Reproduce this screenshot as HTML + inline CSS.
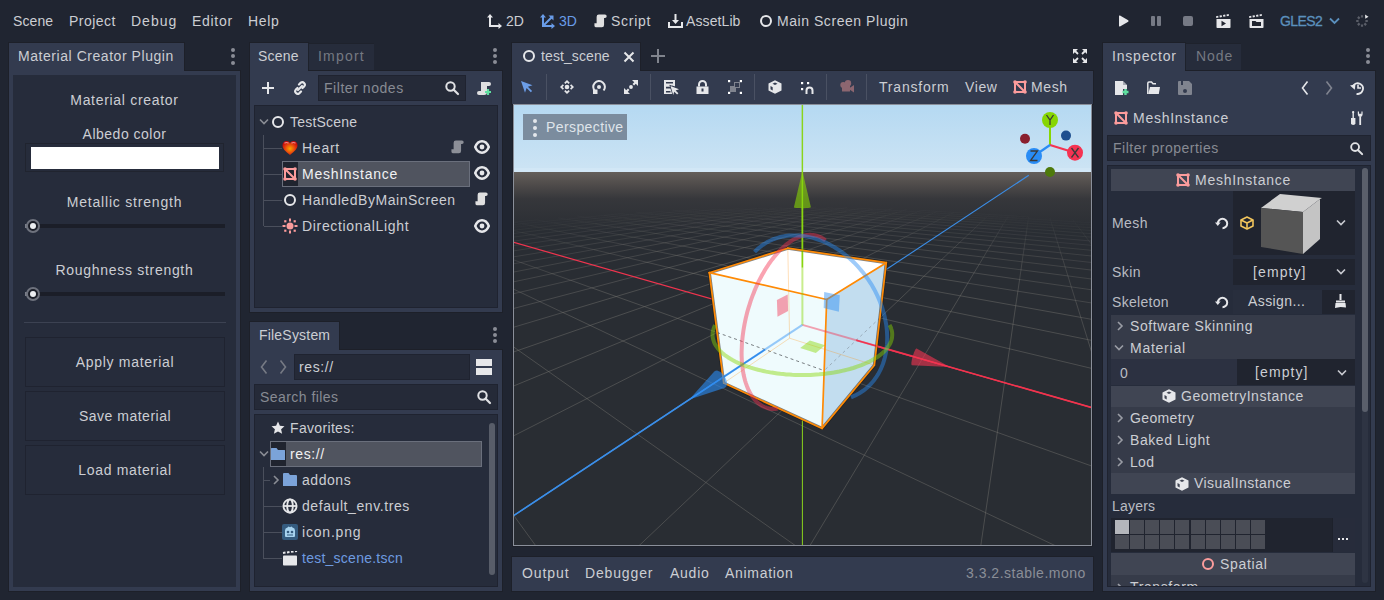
<!DOCTYPE html>
<html><head><meta charset="utf-8">
<style>
*{box-sizing:border-box;margin:0;padding:0}
html,body{width:1384px;height:600px;overflow:hidden;background:#202531;font-family:"Liberation Sans",sans-serif;font-size:14px;color:#ccced3}
.a{position:absolute}
.t{position:absolute;white-space:pre;line-height:16px;letter-spacing:0.6px}
.c{text-align:center}
.tab{position:absolute;background:#333b4f;box-shadow:0 0 0 1px #1d2029}
.tabu{position:absolute;background:#262c3b;border:1px solid #1e222c;border-right:none}
.pnl{position:absolute;background:#333b4f;box-shadow:0 0 0 1px #1d2029}
.dots{position:absolute;width:5px;height:17px}
.dots i{position:absolute;left:0.7px;width:4px;height:4px;margin-top:1px;border-radius:50%;background:#8a8d96}
</style></head><body>
<!-- MENU -->
<div class="t" style="left:13px;top:13px;letter-spacing:0.1px">Scene</div>
<div class="t" style="left:69px;top:13px;letter-spacing:0.47px">Project</div>
<div class="t" style="left:131px;top:13px;letter-spacing:1px">Debug</div>
<div class="t" style="left:192px;top:13px;letter-spacing:0.7px">Editor</div>
<div class="t" style="left:248px;top:13px;letter-spacing:0.67px">Help</div>

<!-- TOPBAR -->
<svg class="a" style="left:487px;top:14px" width="16" height="15" viewBox="0 0 16 15"><g fill="#e6e7ea"><path d="M3 0L6 3.5H4V11H11.5V9L15 12 11.5 15V13H2V3.5H0z"/></g></svg>
<div class="t" style="left:506px;top:13px;letter-spacing:0px">2D</div>
<svg class="a" style="left:540px;top:14px" width="16" height="15" viewBox="0 0 16 15"><g fill="#699ce8"><path d="M3 0L6 3.5H4V9.6L10.3 3.3 8.5 1.5H13.5V6.5L11.7 4.7 5.4 11H11.5V9L15 12 11.5 15V13H2V3.5H0z"/></g></svg>
<div class="t" style="left:559px;top:13px;letter-spacing:0px;color:#699ce8">3D</div>
<svg class="a" style="left:594px;top:14px" width="14" height="14" viewBox="0 0 16 16"><path d="M3 3Q3 0.5 5.5 0.5H12.5Q14.5 0.5 14.5 2.5Q14.5 4.5 12.5 4.5H11.5V12.5Q11.5 15 9 15H2Q0.5 15 0.5 13.5V10.5H3z" fill="#e0e0e0"/></svg>
<div class="t" style="left:611px;top:13px;letter-spacing:0.74px">Script</div>
<svg class="a" style="left:668px;top:14px" width="15" height="14" viewBox="0 0 15 14"><g fill="#e6e7ea"><path d="M6.5 0h2v6h2.5L7.5 10 4 6h2.5z"/><path d="M0 8h2v4h11V8h2v6H0z"/></g></svg>
<div class="t" style="left:686px;top:13px;letter-spacing:0.1px">AssetLib</div>
<div class="a" style="left:760px;top:15px;width:12px;height:12px;border-radius:50%;border:2px solid #e6e7ea"></div>
<div class="t" style="left:777px;top:13px;letter-spacing:0.55px">Main Screen Plugin</div>
<svg class="a" style="left:1118px;top:15px" width="11" height="12" viewBox="0 0 11 12"><path d="M1 1.2Q1 0 2 0.6L10.2 5.3Q11 6 10.2 6.7L2 11.4Q1 12 1 10.8z" fill="#e6e7ea"/></svg>
<div class="a" style="left:1151px;top:16px;width:4px;height:10px;border-radius:1px;background:#767a85"></div>
<div class="a" style="left:1157px;top:16px;width:4px;height:10px;border-radius:1px;background:#767a85"></div>
<div class="a" style="left:1183px;top:16px;width:10px;height:10px;border-radius:2px;background:#767a85"></div>
<svg class="a" style="left:1216px;top:14px" width="15" height="14" viewBox="0 0 15 14"><g fill="#e6e7ea"><path d="M0 2.2L2.2 1.8 2.5 3.6 0.3 4zM3.5 1.6L5.7 1.2 6 3 3.8 3.4zM7 1L9.2 0.6 9.5 2.4 7.3 2.8zM10.5 0.4L12.7 0 13 1.8 10.8 2.2z"/><path d="M0.5 5h14v8.2Q14.5 14 13.7 14H1.3Q0.5 14 0.5 13.2z"/></g><path d="M5.5 6.8L10 9.5 5.5 12.2z" fill="#20242f"/></svg>
<svg class="a" style="left:1249px;top:14px" width="15" height="14" viewBox="0 0 15 14"><g fill="#e6e7ea"><path d="M0 2.2L2.2 1.8 2.5 3.6 0.3 4zM3.5 1.6L5.7 1.2 6 3 3.8 3.4zM7 1L9.2 0.6 9.5 2.4 7.3 2.8zM10.5 0.4L12.7 0 13 1.8 10.8 2.2z"/><path d="M0.5 5h14v8.2Q14.5 14 13.7 14H1.3Q0.5 14 0.5 13.2z"/></g><path d="M3 7h3.5l1 1H12V12H3z" fill="#20242f"/></svg>
<div class="t" style="left:1280px;top:13px;letter-spacing:-0.6px;color:#5b90bd;-webkit-text-stroke:0.3px #5b90bd">GLES2</div>
<svg class="a" style="left:1329px;top:17px" width="11" height="8"><path d="M1 1.5l4.5 4.5 4.5-4.5" fill="none" stroke="#5b90bd" stroke-width="1.8"/></svg>
<svg class="a" style="left:1354px;top:13px" width="16" height="16" viewBox="0 0 16 16"><g stroke="#5a5e68" stroke-width="2.2" stroke-linecap="butt"><path d="M8 2.2v2.4M8 11.4v2.4M2.2 8h2.4M11.4 8h2.4M3.9 3.9l1.7 1.7M10.4 10.4l1.7 1.7M3.9 12.1l1.7-1.7"/></g><path d="M11 1.5l3.5 2.2-3.2 2z" fill="#e6e7ea"/></svg>

<!-- LEFT DOCK -->
<div class="tab" style="left:9px;top:43px;width:175px;height:28px"></div>
<div class="t" style="left:18px;top:48px;letter-spacing:0.55px">Material Creator Plugin</div>
<div class="pnl" style="left:9px;top:71px;width:231px;height:520px"></div><div class="a" style="left:9px;top:69px;width:175px;height:3px;background:#333b4f"></div>
<div class="a" style="left:13px;top:75px;width:223px;height:512px;background:#262c3b"></div>
<div class="t c" style="left:13px;top:92px;width:223px;letter-spacing:0.7px">Material creator</div>
<div class="t c" style="left:13px;top:126px;width:223px;letter-spacing:0.5px">Albedo color</div>
<div class="a" style="left:25px;top:143px;width:199px;height:29px;border:1px solid #20242f"></div>
<div class="a" style="left:31px;top:147px;width:188px;height:22px;background:#fff"></div>
<div class="t c" style="left:13px;top:194px;width:223px;letter-spacing:0.8px">Metallic strength</div>
<div class="a" style="left:25px;top:224px;width:200px;height:4px;background:#1b1e28"></div>
<div class="a" style="left:25px;top:224px;width:8px;height:4px;background:#7b7f8a"></div>
<div class="a" style="left:26px;top:219px;width:14px;height:14px;border-radius:50%;border:2px solid #6e727d;background:#1b1e28"></div>
<div class="a" style="left:30px;top:223px;width:6px;height:6px;border-radius:50%;background:#eceef1"></div>
<div class="t c" style="left:13px;top:262px;width:223px;letter-spacing:0.7px">Roughness strength</div>
<div class="a" style="left:25px;top:292px;width:200px;height:4px;background:#1b1e28"></div>
<div class="a" style="left:25px;top:292px;width:8px;height:4px;background:#7b7f8a"></div>
<div class="a" style="left:26px;top:287px;width:14px;height:14px;border-radius:50%;border:2px solid #6e727d;background:#1b1e28"></div>
<div class="a" style="left:30px;top:291px;width:6px;height:6px;border-radius:50%;background:#eceef1"></div>
<div class="a" style="left:24px;top:322px;width:202px;height:1px;background:#3c4252"></div>
<div class="a" style="left:25px;top:337px;width:200px;height:50px;border:1px solid #1f2330"></div>
<div class="t c" style="left:25px;top:354px;width:200px;letter-spacing:0.7px">Apply material</div>
<div class="a" style="left:25px;top:391px;width:200px;height:50px;border:1px solid #1f2330"></div>
<div class="t c" style="left:25px;top:408px;width:200px;letter-spacing:0.5px">Save material</div>
<div class="a" style="left:25px;top:445px;width:200px;height:50px;border:1px solid #1f2330"></div>
<div class="t c" style="left:25px;top:462px;width:200px;letter-spacing:0.65px">Load material</div>
<div class="dots" style="left:230px;top:47px"><i style="top:0"></i><i style="top:6px"></i><i style="top:13px"></i></div>

<!-- SCENE DOCK -->
<div class="tab" style="left:250px;top:43px;width:58px;height:28px"></div>
<div class="tabu" style="left:308px;top:43px;width:66px;height:28px"></div>
<div class="t" style="left:258px;top:48px;letter-spacing:0.2px">Scene</div>
<div class="t" style="left:318px;top:48px;letter-spacing:1.2px;color:#757982">Import</div>
<div class="dots" style="left:492px;top:47px"><i style="top:0"></i><i style="top:6px"></i><i style="top:12px"></i></div>
<div class="pnl" style="left:250px;top:71px;width:252px;height:241px"></div><div class="a" style="left:250px;top:69px;width:58px;height:3px;background:#333b4f"></div>
<svg class="a" style="left:261px;top:81px" width="14" height="14"><path d="M7 1v12M1 7h12" stroke="#e6e7ea" stroke-width="2"/></svg>
<svg class="a" style="left:292px;top:80px" width="16" height="16" viewBox="0 0 16 16"><g fill="none" stroke="#e6e7ea" stroke-width="2.2" stroke-linecap="round"><path d="M7 4.5l1.8-1.8a2.5 2.5 0 0 1 3.5 3.5L10.5 8"/><path d="M9 11.5l-1.8 1.8a2.5 2.5 0 0 1-3.5-3.5L5.5 8"/><path d="M6 10l4-4"/></g></svg>
<div class="a" style="left:318px;top:75px;width:148px;height:26px;background:#252a38;border:1px solid #1f2330"></div>
<div class="t" style="left:324px;top:80px;letter-spacing:0.55px;color:#878a93">Filter nodes</div>
<svg class="a" style="left:444px;top:80px" width="16" height="16" viewBox="0 0 16 16"><circle cx="6.5" cy="6.5" r="4.2" fill="none" stroke="#e0e1e4" stroke-width="2"/><path d="M9.5 9.5l4.5 4.5" stroke="#e0e1e4" stroke-width="2.2" stroke-linecap="round"/></svg>
<svg class="a" style="left:476px;top:80px" width="16" height="16" viewBox="0 0 16 16"><path d="M5 2h8a2 2 0 0 1 0 4h-2v6a3 3 0 0 1-3 3H3a2 2 0 0 1 0-4h2z" fill="#e0e0e0"/><path d="M12 9v6M9 12h6" stroke="#5fe0a0" stroke-width="2.2"/></svg>
<div class="a" style="left:254px;top:105px;width:244px;height:203px;background:#262c3b;border:1px solid #1f2330"></div>
<svg class="a" style="left:259px;top:118px" width="10" height="8"><path d="M1 1.5l4 4 4-4" fill="none" stroke="#8a8d95" stroke-width="1.6"/></svg>
<div class="a" style="left:272px;top:116px;width:12px;height:12px;border-radius:50%;border:2px solid #e6e7ea"></div>
<div class="t" style="left:290px;top:114px;letter-spacing:0.2px">TestScene</div>
<div class="a" style="left:263px;top:135px;width:1px;height:91px;background:#4a4f5c"></div>
<div class="a" style="left:264px;top:148px;width:18px;height:1px;background:#4a4f5c"></div>
<div class="a" style="left:264px;top:174px;width:18px;height:1px;background:#4a4f5c"></div>
<div class="a" style="left:264px;top:200px;width:18px;height:1px;background:#4a4f5c"></div>
<div class="a" style="left:264px;top:226px;width:18px;height:1px;background:#4a4f5c"></div>
<svg class="a" style="left:282px;top:140px" width="16" height="16" viewBox="0 0 16 16"><defs><radialGradient id="hg" cx="0.5" cy="0.55" r="0.55"><stop offset="0" stop-color="#f7a800"/><stop offset="0.55" stop-color="#e84a0c"/><stop offset="1" stop-color="#c40c0c"/></radialGradient></defs><path d="M8 15C3 11 0.5 8.5 0.5 5.2 0.5 2.8 2.3 1 4.5 1 6 1 7.2 1.8 8 3 8.8 1.8 10 1 11.5 1 13.7 1 15.5 2.8 15.5 5.2 15.5 8.5 13 11 8 15z" fill="url(#hg)"/><path d="M2.5 3.2Q4.5 1.8 6.5 3.2M9.5 3.2Q11.5 1.8 13.5 3.2" stroke="#f08a8a" stroke-width="1.2" fill="none"/></svg>
<div class="t" style="left:302px;top:140px;letter-spacing:0.75px">Heart</div>
<div class="a" style="left:282px;top:161px;width:188px;height:26px;background:#50545f;border:1px solid #6a6f7c"></div>
<div class="a" style="left:283px;top:162px;width:15px;height:24px;background:#20242f"></div>
<svg class="a" style="left:283px;top:167px" width="14" height="14" viewBox="0 0 14 14"><g stroke="#fc9c9c" stroke-width="2" fill="none"><path d="M2 2h10v10H2zM2 2l10 10"/></g><g fill="#fc9c9c"><circle cx="2" cy="2" r="1.8"/><circle cx="12" cy="2" r="1.8"/><circle cx="2" cy="12" r="1.8"/><circle cx="12" cy="12" r="1.8"/></g></svg>
<div class="t" style="left:302px;top:166px;letter-spacing:0.73px;color:#f0f1f3">MeshInstance</div>
<div class="a" style="left:284px;top:194px;width:12px;height:12px;border-radius:50%;border:2px solid #e6e7ea"></div>
<div class="t" style="left:302px;top:192px;letter-spacing:0.55px">HandledByMainScreen</div>
<svg class="a" style="left:282px;top:218px" width="16" height="16" viewBox="0 0 16 16"><g fill="#fc9c9c"><circle cx="8" cy="8" r="3.5"/><rect x="7" y="0.5" width="2" height="3"/><rect x="7" y="12.5" width="2" height="3"/><rect x="0.5" y="7" width="3" height="2"/><rect x="12.5" y="7" width="3" height="2"/><rect x="2.2" y="2.2" width="2.2" height="2.2"/><rect x="11.6" y="2.2" width="2.2" height="2.2"/><rect x="2.2" y="11.6" width="2.2" height="2.2"/><rect x="11.6" y="11.6" width="2.2" height="2.2"/></g></svg>
<div class="t" style="left:302px;top:218px;letter-spacing:0.67px">DirectionalLight</div>
<svg class="a" style="left:451px;top:140px" width="14" height="14" viewBox="0 0 16 16"><path d="M3 3Q3 0.5 5.5 0.5H12.5Q14.5 0.5 14.5 2.5Q14.5 4.5 12.5 4.5H11.5V12.5Q11.5 15 9 15H2Q0.5 15 0.5 13.5V10.5H3z" fill="#8c8f97"/></svg>
<svg class="a" style="left:475px;top:192px" width="14" height="14" viewBox="0 0 16 16"><path d="M3 3Q3 0.5 5.5 0.5H12.5Q14.5 0.5 14.5 2.5Q14.5 4.5 12.5 4.5H11.5V12.5Q11.5 15 9 15H2Q0.5 15 0.5 13.5V10.5H3z" fill="#e0e0e0"/></svg>
<svg class="a" style="left:474px;top:140px" width="16" height="14" viewBox="0 0 16 14"><path d="M1.2 7C3 2.6 5.5 1.3 8 1.3s5 1.3 6.8 5.7c-1.8 4.4-4.3 5.7-6.8 5.7S3 11.4 1.2 7z" fill="none" stroke="#e6e7ea" stroke-width="2.5"/><circle cx="8" cy="7" r="2.4" fill="#e6e7ea"/></svg>
<svg class="a" style="left:474px;top:166px" width="16" height="14" viewBox="0 0 16 14"><path d="M1.2 7C3 2.6 5.5 1.3 8 1.3s5 1.3 6.8 5.7c-1.8 4.4-4.3 5.7-6.8 5.7S3 11.4 1.2 7z" fill="none" stroke="#e6e7ea" stroke-width="2.5"/><circle cx="8" cy="7" r="2.4" fill="#e6e7ea"/></svg>
<svg class="a" style="left:474px;top:219px" width="16" height="14" viewBox="0 0 16 14"><path d="M1.2 7C3 2.6 5.5 1.3 8 1.3s5 1.3 6.8 5.7c-1.8 4.4-4.3 5.7-6.8 5.7S3 11.4 1.2 7z" fill="none" stroke="#e6e7ea" stroke-width="2.5"/><circle cx="8" cy="7" r="2.4" fill="#e6e7ea"/></svg>

<!-- FILESYSTEM DOCK -->
<div class="tab" style="left:250px;top:322px;width:89px;height:28px"></div>
<div class="t" style="left:259px;top:327px;letter-spacing:0.2px">FileSystem</div>
<div class="dots" style="left:492px;top:326px"><i style="top:0"></i><i style="top:6px"></i><i style="top:12px"></i></div>
<div class="pnl" style="left:250px;top:350px;width:252px;height:241px"></div><div class="a" style="left:250px;top:348px;width:89px;height:3px;background:#333b4f"></div>
<svg class="a" style="left:259px;top:359px" width="10" height="16"><path d="M7.5 1.5L2.5 8l5 6.5" fill="none" stroke="#767a84" stroke-width="1.6"/></svg>
<svg class="a" style="left:278px;top:359px" width="10" height="16"><path d="M2.5 1.5L7.5 8l-5 6.5" fill="none" stroke="#767a84" stroke-width="1.6"/></svg>
<div class="a" style="left:294px;top:354px;width:176px;height:26px;background:#252a38;border:1px solid #1f2330"></div>
<div class="t" style="left:299px;top:359px;letter-spacing:0.6px">res://</div>
<div class="a" style="left:476px;top:359px;width:16px;height:7px;background:#e6e7ea"></div>
<div class="a" style="left:476px;top:368px;width:16px;height:7px;background:#e6e7ea"></div>
<div class="a" style="left:254px;top:384px;width:244px;height:26px;background:#252a38;border:1px solid #1f2330"></div>
<div class="t" style="left:260px;top:389px;letter-spacing:0.45px;color:#878a93">Search files</div>
<svg class="a" style="left:476px;top:389px" width="16" height="16" viewBox="0 0 16 16"><circle cx="6.5" cy="6.5" r="4.2" fill="none" stroke="#e0e1e4" stroke-width="2"/><path d="M9.5 9.5l4.5 4.5" stroke="#e0e1e4" stroke-width="2.2" stroke-linecap="round"/></svg>
<div class="a" style="left:254px;top:414px;width:244px;height:173px;background:#262c3b;border:1px solid #1f2330"></div>
<svg class="a" style="left:271px;top:421px" width="14" height="14" viewBox="0 0 14 14"><path d="M7 0.5l1.9 4.2 4.6 0.5-3.4 3.1 1 4.5L7 10.5l-4.1 2.3 1-4.5L0.5 5.2l4.6-0.5z" fill="#e6e7ea"/></svg>
<div class="t" style="left:290px;top:420px;letter-spacing:0.33px">Favorites:</div>
<div class="a" style="left:270px;top:441px;width:212px;height:26px;background:#50545f;border:1px solid #6a6f7c"></div>
<div class="a" style="left:271px;top:442px;width:15px;height:24px;background:#20242f"></div>
<svg class="a" style="left:259px;top:450px" width="10" height="8"><path d="M1 1.5l4 4 4-4" fill="none" stroke="#8a8d95" stroke-width="1.6"/></svg>
<svg class="a" style="left:271px;top:447px" width="14" height="14" viewBox="0 0 14 14"><path d="M0 1.5Q0 1 0.5 1H5.5L7 3H13.5Q14 3 14 3.5V13H0z" fill="#7ba3d9"/></svg>
<div class="t" style="left:290px;top:446px;letter-spacing:0.6px;color:#f0f1f3">res://</div>
<div class="a" style="left:263px;top:467px;width:1px;height:92px;background:#4a4f5c"></div>
<div class="a" style="left:264px;top:480px;width:6px;height:1px;background:#4a4f5c"></div>
<div class="a" style="left:264px;top:506px;width:18px;height:1px;background:#4a4f5c"></div>
<div class="a" style="left:264px;top:532px;width:18px;height:1px;background:#4a4f5c"></div>
<div class="a" style="left:264px;top:558px;width:18px;height:1px;background:#4a4f5c"></div>
<svg class="a" style="left:272px;top:475px" width="8" height="10"><path d="M2 1l4 4-4 4" fill="none" stroke="#8a8d95" stroke-width="1.6"/></svg>
<svg class="a" style="left:283px;top:473px" width="14" height="13" viewBox="0 0 14 13"><path d="M0 1Q0 0 1 0H5.5L7 2H13Q14 2 14 3V13H0z" fill="#7ba3d9"/></svg>
<div class="t" style="left:302px;top:472px;letter-spacing:0.55px">addons</div>
<svg class="a" style="left:282px;top:498px" width="16" height="16" viewBox="0 0 16 16"><g fill="none" stroke="#e6e7ea" stroke-width="1.8"><circle cx="8" cy="8" r="6.6"/><ellipse cx="8" cy="8" rx="2.8" ry="6.6"/><path d="M1.4 8h13.2"/></g></svg>
<div class="t" style="left:302px;top:498px;letter-spacing:0.58px">default_env.tres</div>
<svg class="a" style="left:282px;top:524px" width="16" height="16" viewBox="0 0 16 16"><rect width="16" height="16" rx="2" fill="#355c80"/><path d="M3 6.5Q3 4 5.5 3.5L6.5 2.5 8 3.2 9.5 2.5 10.5 3.5Q13 4 13 6.5V12Q13 13 12 13H4Q3 13 3 12z" fill="#a8d4f0"/><circle cx="6" cy="8" r="1.3" fill="#355c80"/><circle cx="10" cy="8" r="1.3" fill="#355c80"/><path d="M5 11h6" stroke="#355c80" stroke-width="1"/></svg>
<div class="t" style="left:302px;top:524px;letter-spacing:0.8px">icon.png</div>
<svg class="a" style="left:282px;top:551px" width="16" height="15" viewBox="0 0 16 15"><path d="M1 2l2.5-0.4M5 1.4l2.5-0.4M9 0.8l2.5-0.4M13 0.2l2-0.3" stroke="#e6e7ea" stroke-width="2"/><rect x="1" y="4.5" width="14" height="10" rx="0.8" fill="#e6e7ea"/></svg>
<div class="t" style="left:302px;top:550px;letter-spacing:0.25px;color:#6e9be0">test_scene.tscn</div>
<div class="a" style="left:489px;top:423px;width:6px;height:152px;border-radius:3px;background:#585d69"></div>

<!-- CENTER -->
<div class="tab" style="left:512px;top:43px;width:128px;height:28px"></div>
<div class="a" style="left:523px;top:50px;width:12px;height:12px;border-radius:50%;border:2px solid #e6e7ea"></div>
<div class="t" style="left:541px;top:48px;letter-spacing:0.1px">test_scene</div>
<svg class="a" style="left:623px;top:51px" width="12" height="12"><path d="M1.5 1.5l9 9M10.5 1.5l-9 9" stroke="#e6e7ea" stroke-width="2"/></svg>
<svg class="a" style="left:650px;top:48px" width="16" height="16"><path d="M8 1v14M1 8h14" stroke="#80848d" stroke-width="2"/></svg>
<svg class="a" style="left:1073px;top:49px" width="14" height="14" viewBox="0 0 14 14"><g fill="#e6e7ea"><path d="M0 0h5L0 5zM14 0v5L9 0zM0 14v-5l5 5zM14 14H9l5-5z"/></g><g stroke="#e6e7ea" stroke-width="1.8"><path d="M1.5 1.5l3.5 3.5M12.5 1.5L9 5M1.5 12.5L5 9M12.5 12.5L9 9"/></g></svg>
<div class="pnl" style="left:512px;top:71px;width:581px;height:33px"></div><div class="a" style="left:512px;top:69px;width:128px;height:3px;background:#333b4f"></div>
<div class="a" style="left:512px;top:104px;width:581px;height:443px;background:#1d2029"></div>
<div class="a" style="left:513px;top:104px;width:579px;height:442px;background:#8a8f9a"></div>
<!--VP-->
<svg class="a" style="left:514px;top:105px" width="577" height="440" viewBox="0 0 577 440">
<defs><linearGradient id="sky" x1="0" y1="0" x2="0" y2="1"><stop offset="0" stop-color="#b5d9f2"/><stop offset="1" stop-color="#cde4f4"/></linearGradient>
<linearGradient id="haze" x1="0" y1="0" x2="0" y2="1"><stop offset="0" stop-color="#5c5856" stop-opacity="0.95"/><stop offset="0.5" stop-color="#45444a" stop-opacity="0.6"/><stop offset="1" stop-color="#2c3035" stop-opacity="0"/></linearGradient>
<linearGradient id="gnd" gradientUnits="userSpaceOnUse" x1="0" y1="67.0" x2="0" y2="127.0"><stop offset="0" stop-color="#645e5a"/><stop offset="0.2" stop-color="#504c4b"/><stop offset="0.45" stop-color="#36373b"/><stop offset="1" stop-color="#292d33"/></linearGradient>
<clipPath id="vpc"><rect width="577" height="440"/></clipPath></defs>
<g clip-path="url(#vpc)">
<rect width="577" height="67.0" fill="url(#sky)"/>
<rect y="67.0" width="577" height="373.0" fill="url(#gnd)"/>
<rect y="63.0" width="577" height="4" fill="#d6e9f6" opacity="0.6"/>
<path d="M15.4,113.6L-7.2,115.7M411.6,104.1L426.8,105.0M-7.2,115.7L-31.9,118.0M426.8,105.0L442.8,105.9M-31.9,118.0L-59.0,120.6M442.8,105.9L459.5,106.8M-59.0,120.6L-89.0,123.4M459.5,106.8L477.1,107.9M-89.0,123.4L-122.2,126.5M477.1,107.9L495.5,108.9M-122.2,126.5L-159.2,130.0M495.5,108.9L514.9,110.0M97.7,107.6L81.2,109.2M351.5,102.1L364.7,102.9M81.2,109.2L63.4,111.0M364.7,102.9L378.4,103.7M63.4,111.0L44.1,112.9M378.4,103.7L392.7,104.5M44.1,112.9L23.1,114.9M392.7,104.5L407.7,105.4M-155.6,132.5L-198.7,136.7M514.7,111.9L536.0,113.1M-198.7,136.7L-247.6,141.5M536.0,113.1L558.5,114.5M-247.6,141.5L-303.6,147.0M558.5,114.5L582.4,115.9M-303.6,147.0L-368.4,153.4M582.4,115.9L607.7,117.4M136.0,105.6L121.8,107.1M320.7,101.7L333.0,102.5M121.8,107.1L106.4,108.7M333.0,102.5L345.9,103.3M-374.9,158.2L-455.8,166.5M611.9,119.9L640.3,121.7M-455.8,166.5L-552.9,176.5M640.3,121.7L670.6,123.6M170.8,103.8L158.5,105.1M290.5,101.3L302.0,102.1M158.5,105.1L145.3,106.6M302.0,102.1L314.0,102.9M-574.0,184.2L-704.3,198.2M678.8,126.7L713.4,129.0M-704.3,198.2L-869.6,216.1M713.4,129.0L750.7,131.4M191.9,103.4L180.5,104.7M271.6,101.7L282.9,102.5M-930.0,230.7L-1182.2,259.3M765.0,135.5L808.5,138.5M212.5,103.0L201.9,104.2M252.4,102.1L263.3,102.9M-1302.6,284.3L-1747.9,337.6M828.6,143.6L880.4,147.3M241.8,101.4L232.7,102.5M222.4,101.8L232.7,102.5M232.7,102.5L222.9,103.8M232.7,102.5L243.3,103.3M-2034.5,389.5L-3082.9,522.2M908.8,153.7L972.2,158.5M-3082.9,522.2L-5589.6,839.5M972.2,158.5L1042.9,163.9M252.4,102.1L243.3,103.3M212.5,103.0L222.9,103.8M-4129.8,690.8L-10092.2,1491.8M1013.1,166.9L1093.3,173.3M271.6,101.7L263.3,102.9M191.9,103.4L201.9,104.2M-63033.6,9161.3L-116443.9,16804.8M1154.4,184.8L1260.5,193.8M290.5,101.3L282.9,102.5M170.8,103.8L180.5,104.7M1356.4,210.4L1506.4,223.8M308.9,101.0L302.0,102.1M149.3,104.3L158.5,105.1M1669.3,250.0L1903.6,272.4M320.7,101.7L314.0,102.9M136.0,105.6L145.3,106.6M1896.8,286.4L2218.6,319.4M339.0,101.3L333.0,102.5M112.9,106.1L121.8,107.1M2719.5,394.2L3434.8,473.3M351.5,102.1L345.9,103.3M97.7,107.6L106.4,108.7M3639.8,531.7L5118.2,708.7M364.7,102.9L359.3,104.1M81.2,109.2L89.9,110.4M5885.7,867.0L11409.2,1588.2M383.0,102.4L378.4,103.7M55.3,109.8L63.4,111.0M397.0,103.2L392.7,104.5M36.2,111.6L44.1,112.9M411.6,104.1L407.7,105.4M15.4,113.6L23.1,114.9M426.8,105.0L423.4,106.4M-7.2,115.7L0.2,117.2M442.8,105.9L439.8,107.4M-31.9,118.0L-25.0,119.7M477.1,107.9L475.3,109.5M-89.0,123.4L-83.3,125.4M495.5,108.9L494.5,110.6M-122.2,126.5L-117.4,128.7M514.9,110.0L514.7,111.9M-159.2,130.0L-155.6,132.5M535.4,111.2L536.0,113.1M-200.7,133.9L-198.7,136.7M557.0,112.5L558.5,114.5M-247.7,138.3L-247.6,141.5M582.4,115.9L585.3,118.3M-303.6,147.0L-306.3,151.1M607.7,117.4L611.9,119.9M-368.4,153.4L-374.9,158.2M634.6,119.0L640.3,121.7M-444.3,160.8L-455.8,166.5M670.6,123.6L678.8,126.7M-552.9,176.5L-574.0,184.2M703.1,125.6L713.4,129.0M-671.3,188.6L-704.3,198.2M750.7,131.4L765.0,135.5M-869.6,216.1L-930.0,230.7M808.5,138.5L828.6,143.6M-1182.2,259.3L-1302.6,284.3M880.4,147.3L908.8,153.7M-1747.9,337.6L-2034.5,389.5M937.6,151.4L972.2,158.5M-2481.0,425.3L-3082.9,522.2M972.2,158.5L1013.1,166.9M-3082.9,522.2L-4129.8,690.8M1093.3,173.3L1154.4,184.8M-10092.2,1491.8L-63033.6,9161.3M1260.5,193.8L1356.4,210.4M1506.4,223.8L1669.3,250.0M1669.3,250.0L1896.8,286.4M2218.6,319.4L2719.5,394.2M2719.5,394.2L3639.8,531.7M5118.2,708.7L11409.2,1588.2M11409.2,1588.2L120251.3,16804.8" stroke="#9c9890" stroke-opacity="0.000" stroke-width="1" fill="none"/>
<path d="M23.1,114.9L0.2,117.2M407.7,105.4L423.4,106.4M0.2,117.2L-25.0,119.7M423.4,106.4L439.8,107.4M-25.0,119.7L-52.7,122.4M439.8,107.4L457.1,108.4M-52.7,122.4L-83.3,125.4M457.1,108.4L475.3,109.5M-83.3,125.4L-117.4,128.7M475.3,109.5L494.5,110.6M-117.4,128.7L-155.6,132.5M494.5,110.6L514.7,111.9M106.4,108.7L89.9,110.4M345.9,103.3L359.3,104.1M89.9,110.4L72.0,112.2M359.3,104.1L373.3,105.0M72.0,112.2L52.5,114.2M373.3,105.0L388.1,105.9M52.5,114.2L31.2,116.4M388.1,105.9L403.5,106.9M31.2,116.4L8.0,118.8M403.5,106.9L419.7,107.9M8.0,118.8L-17.6,121.4M419.7,107.9L436.7,109.0M-17.6,121.4L-45.9,124.3M436.7,109.0L454.6,110.1M-45.9,124.3L-77.3,127.6M454.6,110.1L473.5,111.3M-77.3,127.6L-112.3,131.2M473.5,111.3L493.4,112.5M-112.3,131.2L-151.8,135.2M493.4,112.5L514.4,113.8M-151.8,135.2L-196.4,139.8M514.4,113.8L536.6,115.2M-196.4,139.8L-247.5,145.1M536.6,115.2L560.2,116.7M-247.5,145.1L-306.3,151.1M560.2,116.7L585.3,118.3M-306.3,151.1L-374.9,158.2M585.3,118.3L611.9,119.9M145.3,106.6L131.0,108.1M314.0,102.9L326.6,103.7M131.0,108.1L115.7,109.8M326.6,103.7L339.8,104.6M115.7,109.8L99.0,111.6M339.8,104.6L353.5,105.5M99.0,111.6L81.0,113.5M353.5,105.5L368.0,106.4M81.0,113.5L61.4,115.6M368.0,106.4L383.1,107.4M61.4,115.6L39.9,117.9M383.1,107.4L399.0,108.4M39.9,117.9L16.3,120.5M399.0,108.4L415.7,109.5M16.3,120.5L-9.7,123.3M415.7,109.5L433.3,110.7M-70.7,129.9L-106.8,133.8M471.4,113.2L492.1,114.5M-106.8,133.8L-147.6,138.2M492.1,114.5L514.1,116.0M-147.6,138.2L-194.0,143.2M514.1,116.0L537.3,117.5M-194.0,143.2L-247.3,148.9M537.3,117.5L562.1,119.1M-247.3,148.9L-309.3,155.6M562.1,119.1L588.4,120.8M-309.3,155.6L-382.1,163.5M588.4,120.8L616.5,122.7M-382.1,163.5L-468.8,172.8M616.5,122.7L646.6,124.6M-468.8,172.8L-574.0,184.2M646.6,124.6L678.8,126.7M180.5,104.7L168.2,106.1M282.9,102.5L294.6,103.3M168.2,106.1L155.0,107.6M294.6,103.3L306.9,104.2M155.0,107.6L140.7,109.2M306.9,104.2L319.8,105.0M140.7,109.2L125.4,110.9M319.8,105.0L333.2,106.0M125.4,110.9L108.7,112.8M333.2,106.0L347.4,106.9M-312.6,160.6L-390.1,169.4M591.9,123.7L621.6,125.7M-390.1,169.4L-483.6,180.0M621.6,125.7L653.5,127.9M-483.6,180.0L-598.4,193.1M653.5,127.9L687.9,130.3M-598.4,193.1L-742.8,209.4M687.9,130.3L724.9,132.8M-742.8,209.4L-930.0,230.7M724.9,132.8L765.0,135.5M201.9,104.2L190.5,105.6M263.3,102.9L274.8,103.7M190.5,105.6L178.3,107.0M274.8,103.7L286.8,104.6M178.3,107.0L165.2,108.6M286.8,104.6L299.3,105.5M165.2,108.6L151.0,110.3M299.3,105.5L312.4,106.5M-500.5,188.3L-626.7,203.4M661.3,131.6L698.1,134.2M-626.7,203.4L-788.5,222.7M698.1,134.2L737.9,137.1M-788.5,222.7L-1003.4,248.5M737.9,137.1L781.3,140.2M-1003.4,248.5L-1302.6,284.3M781.3,140.2L828.6,143.6M222.9,103.8L212.4,105.1M243.3,103.3L254.5,104.2M212.4,105.1L201.1,106.5M254.5,104.2L266.1,105.1M201.1,106.5L189.0,108.1M266.1,105.1L278.3,106.0M-843.5,238.8L-1094.5,270.5M752.7,141.9L799.8,145.5M-1094.5,270.5L-1458.6,316.6M799.8,145.5L851.6,149.4M-1458.6,316.6L-2034.5,389.5M851.6,149.4L908.8,153.7M243.3,103.3L233.7,104.6M222.9,103.8L233.7,104.6M233.7,104.6L223.3,106.0M233.7,104.6L245.0,105.5M223.3,106.0L212.2,107.5M245.0,105.5L256.8,106.5M-1210.7,298.7L-1668.9,360.2M821.3,151.6L878.4,156.2M-1668.9,360.2L-2456.8,466.1M878.4,156.2L941.9,161.2M-2456.8,466.1L-4129.8,690.8M941.9,161.2L1013.1,166.9M263.3,102.9L254.5,104.2M201.9,104.2L212.4,105.1M254.5,104.2L245.0,105.5M212.4,105.1L223.3,106.0M245.0,105.5L234.8,107.0M223.3,106.0L234.8,107.0M-1967.9,422.2L-3140.8,590.1M909.9,164.1L981.3,170.2M-3140.8,590.1L-6403.8,1057.0M981.3,170.2L1062.2,177.0M-6403.8,1057.0L-63033.6,9161.3M1062.2,177.0L1154.4,184.8M282.9,102.5L274.8,103.7M180.5,104.7L190.5,105.6M274.8,103.7L266.1,105.1M190.5,105.6L201.1,106.5M266.1,105.1L256.8,106.5M201.1,106.5L212.2,107.5M-4439.2,825.5L-15118.6,2460.5M1028.9,180.9L1122.1,189.3M-15118.6,2460.5L-108808.6,16804.8M1122.1,189.3L1230.1,199.0M1230.1,199.0L1356.4,210.4M302.0,102.1L294.6,103.3M158.5,105.1L168.2,106.1M294.6,103.3L286.8,104.6M168.2,106.1L178.3,107.0M286.8,104.6L278.3,106.0M178.3,107.0L189.0,108.1M1197.1,204.7L1326.3,217.1M1326.3,217.1L1481.0,231.9M1481.0,231.9L1669.3,250.0M314.0,102.9L306.9,104.2M145.3,106.6L155.0,107.6M306.9,104.2L299.3,105.5M155.0,107.6L165.2,108.6M299.3,105.5L291.1,107.0M165.2,108.6L175.9,109.7M1293.3,224.4L1452.9,240.8M1452.9,240.8L1649.3,261.0M1649.3,261.0L1896.8,286.4M333.0,102.5L326.6,103.7M121.8,107.1L131.0,108.1M326.6,103.7L319.8,105.0M131.0,108.1L140.7,109.2M319.8,105.0L312.4,106.5M140.7,109.2L151.0,110.3M1626.6,273.4L1889.0,302.4M1889.0,302.4L2236.8,340.9M2236.8,340.9L2719.5,394.2M345.9,103.3L339.8,104.6M106.4,108.7L115.7,109.8M339.8,104.6L333.2,106.0M115.7,109.8L125.4,110.9M2258.3,366.3L2799.9,431.1M2799.9,431.1L3639.8,531.7M359.3,104.1L353.5,105.5M89.9,110.4L99.0,111.6M353.5,105.5L347.4,106.9M99.0,111.6L108.7,112.8M2900.6,477.3L3913.4,609.5M3913.4,609.5L5885.7,867.0M378.4,103.7L373.3,105.0M63.4,111.0L72.0,112.2M373.3,105.0L368.0,106.4M72.0,112.2L81.0,113.5M368.0,106.4L362.2,107.9M81.0,113.5L90.6,114.9M4296.8,718.7L7155.3,1129.0M7155.3,1129.0L19694.0,2929.0M19694.0,2929.0L116354.1,16804.8M392.7,104.5L388.1,105.9M44.1,112.9L52.5,114.2M388.1,105.9L383.1,107.4M52.5,114.2L61.4,115.6M407.7,105.4L403.5,106.9M23.1,114.9L31.2,116.4M403.5,106.9L399.0,108.4M31.2,116.4L39.9,117.9M423.4,106.4L419.7,107.9M0.2,117.2L8.0,118.8M419.7,107.9L415.7,109.5M8.0,118.8L16.3,120.5M439.8,107.4L436.7,109.0M-25.0,119.7L-17.6,121.4M436.7,109.0L433.3,110.7M-17.6,121.4L-9.7,123.3M475.3,109.5L473.5,111.3M-83.3,125.4L-77.3,127.6M473.5,111.3L471.4,113.2M-77.3,127.6L-70.7,129.9M494.5,110.6L493.4,112.5M-117.4,128.7L-112.3,131.2M493.4,112.5L492.1,114.5M-112.3,131.2L-106.8,133.8M514.7,111.9L514.4,113.8M-155.6,132.5L-151.8,135.2M514.4,113.8L514.1,116.0M-151.8,135.2L-147.6,138.2M536.0,113.1L536.6,115.2M-198.7,136.7L-196.4,139.8M536.6,115.2L537.3,117.5M-196.4,139.8L-194.0,143.2M558.5,114.5L560.2,116.7M-247.6,141.5L-247.5,145.1M560.2,116.7L562.1,119.1M-247.5,145.1L-247.3,148.9M562.1,119.1L564.1,121.8M-247.3,148.9L-247.2,153.2M585.3,118.3L588.4,120.8M-306.3,151.1L-309.3,155.6M588.4,120.8L591.9,123.7M-309.3,155.6L-312.6,160.6M611.9,119.9L616.5,122.7M-374.9,158.2L-382.1,163.5M616.5,122.7L621.6,125.7M-382.1,163.5L-390.1,169.4M640.3,121.7L646.6,124.6M-455.8,166.5L-468.8,172.8M646.6,124.6L653.5,127.9M-468.8,172.8L-483.6,180.0M653.5,127.9L661.3,131.6M-483.6,180.0L-500.5,188.3M678.8,126.7L687.9,130.3M-574.0,184.2L-598.4,193.1M687.9,130.3L698.1,134.2M-598.4,193.1L-626.7,203.4M698.1,134.2L709.6,138.7M-626.7,203.4L-660.0,215.5M713.4,129.0L724.9,132.8M-704.3,198.2L-742.8,209.4M724.9,132.8L737.9,137.1M-742.8,209.4L-788.5,222.7M737.9,137.1L752.7,141.9M-788.5,222.7L-843.5,238.8M765.0,135.5L781.3,140.2M-930.0,230.7L-1003.4,248.5M781.3,140.2L799.8,145.5M-1003.4,248.5L-1094.5,270.5M799.8,145.5L821.3,151.6M-1094.5,270.5L-1210.7,298.7M828.6,143.6L851.6,149.4M-1302.6,284.3L-1458.6,316.6M851.6,149.4L878.4,156.2M-1458.6,316.6L-1668.9,360.2M878.4,156.2L909.9,164.1M-1668.9,360.2L-1967.9,422.2M908.8,153.7L941.9,161.2M-2034.5,389.5L-2456.8,466.1M941.9,161.2L981.3,170.2M-2456.8,466.1L-3140.8,590.1M981.3,170.2L1028.9,180.9M-3140.8,590.1L-4439.2,825.5M1013.1,166.9L1062.2,177.0M-4129.8,690.8L-6403.8,1057.0M1062.2,177.0L1122.1,189.3M-6403.8,1057.0L-15118.6,2460.5M1122.1,189.3L1197.1,204.7M-15118.6,2460.5L-104188.2,16804.8M1154.4,184.8L1230.1,199.0M-63033.6,9161.3L-115795.7,16804.8M1230.1,199.0L1326.3,217.1M1326.3,217.1L1452.9,240.8M1452.9,240.8L1626.6,273.4M1356.4,210.4L1481.0,231.9M1481.0,231.9L1649.3,261.0M1649.3,261.0L1889.0,302.4M1889.0,302.4L2258.3,366.3M2258.3,366.3L2900.6,477.3M1896.8,286.4L2236.8,340.9M2236.8,340.9L2799.9,431.1M2799.9,431.1L3913.4,609.5M3913.4,609.5L7155.3,1129.0M7155.3,1129.0L104980.6,16804.8M3639.8,531.7L5885.7,867.0M5885.7,867.0L19694.0,2929.0M19694.0,2929.0L112616.0,16804.8" stroke="#9c9890" stroke-opacity="0.030" stroke-width="1" fill="none"/>
<path d="M-9.7,123.3L-38.6,126.4M433.3,110.7L451.8,111.9M-38.6,126.4L-70.7,129.9M451.8,111.9L471.4,113.2M108.7,112.8L90.6,114.9M347.4,106.9L362.2,107.9M90.6,114.9L70.8,117.1M362.2,107.9L377.7,109.0M70.8,117.1L49.1,119.6M377.7,109.0L394.1,110.1M49.1,119.6L25.1,122.3M394.1,110.1L411.4,111.3M25.1,122.3L-1.3,125.3M411.4,111.3L429.6,112.6M-1.3,125.3L-30.8,128.6M429.6,112.6L448.8,113.9M-30.8,128.6L-63.7,132.4M448.8,113.9L469.2,115.3M-63.7,132.4L-100.8,136.6M469.2,115.3L490.8,116.8M-100.8,136.6L-143.0,141.4M490.8,116.8L513.7,118.3M-143.0,141.4L-191.3,146.9M513.7,118.3L538.1,120.0M-191.3,146.9L-247.2,153.2M538.1,120.0L564.1,121.8M-247.2,153.2L-312.6,160.6M564.1,121.8L591.9,123.7M151.0,110.3L135.6,112.2M312.4,106.5L326.2,107.4M135.6,112.2L118.9,114.2M326.2,107.4L340.7,108.5M118.9,114.2L100.7,116.3M340.7,108.5L355.9,109.6M100.7,116.3L80.8,118.7M355.9,109.6L372.0,110.7M80.8,118.7L58.8,121.3M372.0,110.7L388.9,112.0M58.8,121.3L34.6,124.2M388.9,112.0L406.7,113.2M-94.3,139.7L-138.0,144.9M489.3,119.2L513.3,120.9M-138.0,144.9L-188.4,150.9M513.3,120.9L539.0,122.7M-188.4,150.9L-247.0,157.9M539.0,122.7L566.4,124.7M-247.0,157.9L-316.3,166.2M566.4,124.7L595.7,126.8M-316.3,166.2L-399.3,176.2M595.7,126.8L627.3,129.1M-399.3,176.2L-500.5,188.3M627.3,129.1L661.3,131.6M189.0,108.1L175.9,109.7M278.3,106.0L291.1,107.0M175.9,109.7L161.8,111.5M291.1,107.0L304.6,108.0M161.8,111.5L146.4,113.5M304.6,108.0L318.7,109.1M146.4,113.5L129.7,115.6M318.7,109.1L333.5,110.2M-320.5,172.6L-409.7,183.8M600.0,130.4L633.7,132.9M-409.7,183.8L-520.0,197.8M633.7,132.9L670.1,135.7M-520.0,197.8L-660.0,215.5M670.1,135.7L709.6,138.7M-660.0,215.5L-843.5,238.8M709.6,138.7L752.7,141.9M212.2,107.5L200.2,109.1M256.8,106.5L269.3,107.5M200.2,109.1L187.2,110.9M269.3,107.5L282.3,108.5M187.2,110.9L173.2,112.8M282.3,108.5L296.1,109.6M-542.8,209.0L-699.8,230.0M680.0,140.3L722.8,143.7M-699.8,230.0L-911.1,258.4M722.8,143.7L769.6,147.5M-911.1,258.4L-1210.7,298.7M769.6,147.5L821.3,151.6M234.8,107.0L223.8,108.6M234.8,107.0L246.8,108.0M223.8,108.6L212.0,110.3M246.8,108.0L259.5,109.1M212.0,110.3L199.1,112.1M259.5,109.1L272.8,110.2M-748.1,247.7L-996.0,283.1M737.9,149.6L789.3,153.9M-996.0,283.1L-1364.0,335.8M789.3,153.9L846.3,158.7M-1364.0,335.8L-1967.9,422.2M846.3,158.7L909.9,164.1M256.8,106.5L246.8,108.0M212.2,107.5L223.8,108.6M246.8,108.0L236.0,109.7M223.8,108.6L236.0,109.7M236.0,109.7L224.4,111.5M236.0,109.7L248.9,110.8M-1105.9,315.1L-1575.6,387.0M812.3,161.5L875.8,167.2M-1575.6,387.0L-2426.4,517.3M875.8,167.2L947.5,173.6M-2426.4,517.3L-4439.2,825.5M947.5,173.6L1028.9,180.9M278.3,106.0L269.3,107.5M189.0,108.1L200.2,109.1M269.3,107.5L259.5,109.1M200.2,109.1L212.0,110.3M259.5,109.1L248.9,110.8M212.0,110.3L224.4,111.5M-1886.2,462.3L-3218.8,681.6M911.3,177.3L993.1,185.1M-3218.8,681.6L-7855.2,1444.8M993.1,185.1L1087.4,194.2M-7855.2,1444.8L-101173.2,16804.8M1087.4,194.2L1197.1,204.7M291.1,107.0L282.3,108.5M175.9,109.7L187.2,110.9M282.3,108.5L272.8,110.2M187.2,110.9L199.1,112.1M-4918.6,1034.1L-41450.7,7535.3M1049.7,199.4L1161.1,210.9M-41450.7,7535.3L-93537.9,16804.8M1161.1,210.9L1293.3,224.4M312.4,106.5L304.6,108.0M151.0,110.3L161.8,111.5M304.6,108.0L296.1,109.6M161.8,111.5L173.2,112.8M1256.9,232.6L1421.6,250.8M1421.6,250.8L1626.6,273.4M333.2,106.0L326.2,107.4M125.4,110.9L135.6,112.2M326.2,107.4L318.7,109.1M135.6,112.2L146.4,113.5M318.7,109.1L310.5,110.8M146.4,113.5L157.9,114.8M1386.5,261.9L1600.9,287.6M1600.9,287.6L1880.0,321.0M1880.0,321.0L2258.3,366.3M347.4,106.9L340.7,108.5M108.7,112.8L118.9,114.2M340.7,108.5L333.5,110.2M118.9,114.2L129.7,115.6M1869.5,342.7L2284.2,396.8M2284.2,396.8L2900.6,477.3M362.2,107.9L355.9,109.6M90.6,114.9L100.7,116.3M355.9,109.6L349.2,111.4M100.7,116.3L111.5,117.9M2315.9,434.3L3030.5,536.9M3030.5,536.9L4296.8,718.7M383.1,107.4L377.7,109.0M61.4,115.6L70.8,117.1M377.7,109.0L372.0,110.7M70.8,117.1L80.8,118.7M4873.0,882.7L9659.1,1645.7M9659.1,1645.7L104746.6,16804.8M399.0,108.4L394.1,110.1M39.9,117.9L49.1,119.6M394.1,110.1L388.9,112.0M49.1,119.6L58.8,121.3M16898.4,3139.6L93139.1,16804.8M415.7,109.5L411.4,111.3M16.3,120.5L25.1,122.3M411.4,111.3L406.7,113.2M25.1,122.3L34.6,124.2M433.3,110.7L429.6,112.6M-9.7,123.3L-1.3,125.3M429.6,112.6L425.6,114.6M-1.3,125.3L7.7,127.5M471.4,113.2L469.2,115.3M-70.7,129.9L-63.7,132.4M469.2,115.3L466.8,117.6M-63.7,132.4L-56.1,135.1M492.1,114.5L490.8,116.8M-106.8,133.8L-100.8,136.6M490.8,116.8L489.3,119.2M-100.8,136.6L-94.3,139.7M514.1,116.0L513.7,118.3M-147.6,138.2L-143.0,141.4M513.7,118.3L513.3,120.9M-143.0,141.4L-138.0,144.9M537.3,117.5L538.1,120.0M-194.0,143.2L-191.3,146.9M538.1,120.0L539.0,122.7M-191.3,146.9L-188.4,150.9M564.1,121.8L566.4,124.7M-247.2,153.2L-247.0,157.9M566.4,124.7L568.9,128.0M-247.0,157.9L-246.9,163.2M591.9,123.7L595.7,126.8M-312.6,160.6L-316.3,166.2M595.7,126.8L600.0,130.4M-316.3,166.2L-320.5,172.6M621.6,125.7L627.3,129.1M-390.1,169.4L-399.3,176.2M627.3,129.1L633.7,132.9M-399.3,176.2L-409.7,183.8M633.7,132.9L640.9,137.2M-409.7,183.8L-421.6,192.7M661.3,131.6L670.1,135.7M-500.5,188.3L-520.0,197.8M670.1,135.7L680.0,140.3M-520.0,197.8L-542.8,209.0M709.6,138.7L722.8,143.7M-660.0,215.5L-699.8,230.0M722.8,143.7L737.9,149.6M-699.8,230.0L-748.1,247.7M752.7,141.9L769.6,147.5M-843.5,238.8L-911.1,258.4M769.6,147.5L789.3,153.9M-911.1,258.4L-996.0,283.1M789.3,153.9L812.3,161.5M-996.0,283.1L-1105.9,315.1M821.3,151.6L846.3,158.7M-1210.7,298.7L-1364.0,335.8M846.3,158.7L875.8,167.2M-1364.0,335.8L-1575.6,387.0M875.8,167.2L911.3,177.3M-1575.6,387.0L-1886.2,462.3M909.9,164.1L947.5,173.6M-1967.9,422.2L-2426.4,517.3M947.5,173.6L993.1,185.1M-2426.4,517.3L-3218.8,681.6M993.1,185.1L1049.7,199.4M-3218.8,681.6L-4918.6,1034.1M1028.9,180.9L1087.4,194.2M-4439.2,825.5L-7855.2,1444.8M1087.4,194.2L1161.1,210.9M-7855.2,1444.8L-41450.7,7535.3M1161.1,210.9L1256.9,232.6M-41450.7,7535.3L-92580.7,16804.8M1197.1,204.7L1293.3,224.4M1293.3,224.4L1421.6,250.8M1421.6,250.8L1600.9,287.6M1600.9,287.6L1869.5,342.7M1626.6,273.4L1880.0,321.0M1880.0,321.0L2284.2,396.8M2284.2,396.8L3030.5,536.9M3030.5,536.9L4873.0,882.7M4873.0,882.7L16898.4,3139.6M16898.4,3139.6L89710.0,16804.8M2900.6,477.3L4296.8,718.7M4296.8,718.7L9659.1,1645.7M9659.1,1645.7L97345.3,16804.8" stroke="#9c9890" stroke-opacity="0.060" stroke-width="1" fill="none"/>
<path d="M34.6,124.2L7.7,127.5M406.7,113.2L425.6,114.6M7.7,127.5L-22.3,131.1M425.6,114.6L445.6,116.0M-22.3,131.1L-56.1,135.1M445.6,116.0L466.8,117.6M-56.1,135.1L-94.3,139.7M466.8,117.6L489.3,119.2M129.7,115.6L111.5,117.9M333.5,110.2L349.2,111.4M111.5,117.9L91.4,120.4M349.2,111.4L365.7,112.6M91.4,120.4L69.3,123.2M365.7,112.6L383.2,113.9M69.3,123.2L44.8,126.3M383.2,113.9L401.6,115.3M44.8,126.3L17.4,129.8M401.6,115.3L421.2,116.8M17.4,129.8L-13.2,133.7M421.2,116.8L442.0,118.4M-13.2,133.7L-47.8,138.0M442.0,118.4L464.1,120.1M-47.8,138.0L-87.3,143.0M464.1,120.1L487.7,121.9M-87.3,143.0L-132.5,148.8M487.7,121.9L512.9,123.8M-132.5,148.8L-185.1,155.4M512.9,123.8L539.9,125.8M-185.1,155.4L-246.9,163.2M539.9,125.8L568.9,128.0M-246.9,163.2L-320.5,172.6M568.9,128.0L600.0,130.4M173.2,112.8L157.9,114.8M296.1,109.6L310.5,110.8M157.9,114.8L141.2,117.1M310.5,110.8L325.8,112.0M141.2,117.1L122.9,119.5M325.8,112.0L341.9,113.3M122.9,119.5L102.8,122.2M341.9,113.3L358.9,114.7M102.8,122.2L80.5,125.2M358.9,114.7L376.9,116.1M-126.5,153.0L-181.5,160.4M512.5,126.9L541.0,129.2M-181.5,160.4L-246.7,169.2M541.0,129.2L571.7,131.7M-246.7,169.2L-325.2,179.7M571.7,131.7L604.9,134.3M-325.2,179.7L-421.6,192.7M604.9,134.3L640.9,137.2M-421.6,192.7L-542.8,209.0M640.9,137.2L680.0,140.3M199.1,112.1L185.2,114.1M272.8,110.2L286.9,111.4M185.2,114.1L170.0,116.3M286.9,111.4L301.7,112.7M170.0,116.3L153.4,118.7M301.7,112.7L317.3,114.0M-330.6,187.9L-435.5,202.9M610.3,138.8L649.0,142.1M-435.5,202.9L-569.9,222.2M649.0,142.1L691.4,145.6M-569.9,222.2L-748.1,247.7M691.4,145.6L737.9,149.6M224.4,111.5L211.7,113.4M248.9,110.8L262.5,112.1M211.7,113.4L198.0,115.5M262.5,112.1L276.9,113.3M-602.4,238.1L-808.1,269.5M704.5,151.8L755.5,156.4M-808.1,269.5L-1105.9,315.1M755.5,156.4L812.3,161.5M248.9,110.8L237.5,112.7M224.4,111.5L237.5,112.7M237.5,112.7L225.0,114.8M237.5,112.7L251.3,114.0M-884.5,297.4L-1253.8,358.2M776.2,164.3L839.6,170.4M-1253.8,358.2L-1886.2,462.3M839.6,170.4L911.3,177.3M272.8,110.2L262.5,112.1M199.1,112.1L211.7,113.4M262.5,112.1L251.3,114.0M211.7,113.4L225.0,114.8M-1463.5,419.2L-2387.1,583.6M872.6,181.2L954.7,189.7M-2387.1,583.6L-4918.6,1034.1M954.7,189.7L1049.7,199.4M296.1,109.6L286.9,111.4M173.2,112.8L185.2,114.1M286.9,111.4L276.9,113.3M185.2,114.1L198.0,115.5M-3329.9,811.9L-11171.7,2330.7M1008.9,205.1L1121.8,217.6M-11171.7,2330.7L-85902.6,16804.8M1121.8,217.6L1256.9,232.6M310.5,110.8L301.7,112.7M157.9,114.8L170.0,116.3M301.7,112.7L292.1,114.7M170.0,116.3L182.9,117.8M-5761.1,1400.7L-78267.3,16804.8M1078.6,225.0L1216.5,241.6M1216.5,241.6L1386.5,261.9M333.5,110.2L325.8,112.0M129.7,115.6L141.2,117.1M325.8,112.0L317.3,114.0M141.2,117.1L153.4,118.7M1346.8,274.5L1571.4,303.8M1571.4,303.8L1869.5,342.7M349.2,111.4L341.9,113.3M111.5,117.9L122.9,119.5M341.9,113.3L333.9,115.4M122.9,119.5L135.1,121.3M1537.3,322.6L1857.0,368.4M1857.0,368.4L2315.9,434.3M372.0,110.7L365.7,112.6M80.8,118.7L91.4,120.4M365.7,112.6L358.9,114.7M91.4,120.4L102.8,122.2M2355.8,481.4L3204.5,616.7M3204.5,616.7L4873.0,882.7M388.9,112.0L383.2,113.9M58.8,121.3L69.3,123.2M383.2,113.9L376.9,116.1M69.3,123.2L80.5,125.2M3449.4,729.1L5835.8,1156.8M5835.8,1156.8L16898.4,3139.6M406.7,113.2L401.6,115.3M34.6,124.2L44.8,126.3M401.6,115.3L396.1,117.6M44.8,126.3L55.7,128.6M7771.5,1707.8L81531.6,16804.8M425.6,114.6L421.2,116.8M7.7,127.5L17.4,129.8M421.2,116.8L416.4,119.2M17.4,129.8L27.9,132.3M466.8,117.6L464.1,120.1M-56.1,135.1L-47.8,138.0M464.1,120.1L461.2,122.8M-47.8,138.0L-38.8,141.2M489.3,119.2L487.7,121.9M-94.3,139.7L-87.3,143.0M487.7,121.9L486.0,124.8M-87.3,143.0L-79.5,146.7M513.3,120.9L512.9,123.8M-138.0,144.9L-132.5,148.8M512.9,123.8L512.5,126.9M-132.5,148.8L-126.5,153.0M539.0,122.7L539.9,125.8M-188.4,150.9L-185.1,155.4M539.9,125.8L541.0,129.2M-185.1,155.4L-181.5,160.4M568.9,128.0L571.7,131.7M-246.9,163.2L-246.7,169.2M571.7,131.7L574.8,135.8M-246.7,169.2L-246.5,175.9M600.0,130.4L604.9,134.3M-320.5,172.6L-325.2,179.7M604.9,134.3L610.3,138.8M-325.2,179.7L-330.6,187.9M640.9,137.2L649.0,142.1M-421.6,192.7L-435.5,202.9M649.0,142.1L658.4,147.6M-435.5,202.9L-451.9,215.0M680.0,140.3L691.4,145.6M-542.8,209.0L-569.9,222.2M691.4,145.6L704.5,151.8M-569.9,222.2L-602.4,238.1M737.9,149.6L755.5,156.4M-748.1,247.7L-808.1,269.5M755.5,156.4L776.2,164.3M-808.1,269.5L-884.5,297.4M812.3,161.5L839.6,170.4M-1105.9,315.1L-1253.8,358.2M839.6,170.4L872.6,181.2M-1253.8,358.2L-1463.5,419.2M911.3,177.3L954.7,189.7M-1886.2,462.3L-2387.1,583.6M954.7,189.7L1008.9,205.1M-2387.1,583.6L-3329.9,811.9M1049.7,199.4L1121.8,217.6M-4918.6,1034.1L-11171.7,2330.7M1121.8,217.6L1216.5,241.6M-11171.7,2330.7L-80973.3,16804.8M1216.5,241.6L1346.8,274.5M1256.9,232.6L1386.5,261.9M1386.5,261.9L1571.4,303.8M1571.4,303.8L1857.0,368.4M1857.0,368.4L2355.8,481.4M2355.8,481.4L3449.4,729.1M1869.5,342.7L2315.9,434.3M2315.9,434.3L3204.5,616.7M3204.5,616.7L5835.8,1156.8M5835.8,1156.8L82074.6,16804.8" stroke="#9c9890" stroke-opacity="0.090" stroke-width="1" fill="none"/>
<path d="M80.5,125.2L55.7,128.6M376.9,116.1L396.1,117.6M55.7,128.6L27.9,132.3M396.1,117.6L416.4,119.2M27.9,132.3L-3.3,136.5M416.4,119.2L438.1,121.0M-3.3,136.5L-38.8,141.2M438.1,121.0L461.2,122.8M-38.8,141.2L-79.5,146.7M461.2,122.8L486.0,124.8M-79.5,146.7L-126.5,153.0M486.0,124.8L512.5,126.9M153.4,118.7L135.1,121.3M317.3,114.0L333.9,115.4M135.1,121.3L114.9,124.2M333.9,115.4L351.5,116.9M114.9,124.2L92.5,127.4M351.5,116.9L370.1,118.5M92.5,127.4L67.4,131.0M370.1,118.5L390.0,120.1M67.4,131.0L39.3,135.0M390.0,120.1L411.2,121.9M39.3,135.0L7.4,139.5M411.2,121.9L433.8,123.8M7.4,139.5L-29.0,144.8M433.8,123.8L458.0,125.9M-29.0,144.8L-70.9,150.8M458.0,125.9L484.0,128.1M-70.9,150.8L-119.8,157.7M484.0,128.1L512.0,130.5M-119.8,157.7L-177.4,166.0M512.0,130.5L542.2,133.0M-177.4,166.0L-246.5,175.9M542.2,133.0L574.8,135.8M-246.5,175.9L-330.6,187.9M574.8,135.8L610.3,138.8M198.0,115.5L182.9,117.8M276.9,113.3L292.1,114.7M182.9,117.8L166.3,120.3M292.1,114.7L308.1,116.2M166.3,120.3L148.1,123.1M308.1,116.2L325.2,117.7M148.1,123.1L127.9,126.2M325.2,117.7L343.3,119.3M-172.9,172.3L-246.2,183.5M543.5,137.3L578.4,140.4M-246.2,183.5L-336.9,197.4M578.4,140.4L616.6,143.9M-336.9,197.4L-451.9,215.0M616.6,143.9L658.4,147.6M-451.9,215.0L-602.4,238.1M658.4,147.6L704.5,151.8M225.0,114.8L211.5,117.0M251.3,114.0L266.0,115.4M211.5,117.0L196.6,119.5M266.0,115.4L281.6,116.9M196.6,119.5L180.2,122.2M281.6,116.9L298.1,118.5M-344.2,208.5L-471.4,229.4M623.7,149.7L669.3,154.1M-471.4,229.4L-642.4,257.5M669.3,154.1L719.8,158.9M-642.4,257.5L-884.5,297.4M719.8,158.9L776.2,164.3M251.3,114.0L239.2,116.2M225.0,114.8L239.2,116.2M239.2,116.2L225.8,118.6M239.2,116.2L254.1,117.7M-692.5,282.0L-985.1,334.1M737.9,167.4L800.9,173.9M-985.1,334.1L-1463.5,419.2M800.9,173.9L872.6,181.2M276.9,113.3L266.0,115.4M198.0,115.5L211.5,117.0M266.0,115.4L254.1,117.7M211.5,117.0L225.8,118.6M-1123.6,384.6L-1783.9,512.5M831.0,185.5L913.2,194.6M-1783.9,512.5L-3329.9,811.9M913.2,194.6L1008.9,205.1M292.1,114.7L281.6,116.9M182.9,117.8L196.6,119.5M-2334.3,672.7L-5761.1,1400.7M964.4,211.4L1078.6,225.0M317.3,114.0L308.1,116.2M153.4,118.7L166.3,120.3M308.1,116.2L298.1,118.5M166.3,120.3L180.2,122.2M-3500.6,1012.2L-26414.1,6402.5M1031.0,233.2L1171.6,251.6M-26414.1,6402.5L-70631.9,16804.8M1171.6,251.6L1346.8,274.5M333.9,115.4L325.2,117.7M135.1,121.3L148.1,123.1M1301.8,288.8L1537.3,322.6M358.9,114.7L351.5,116.9M102.8,122.2L114.9,124.2M351.5,116.9L343.3,119.3M114.9,124.2L127.9,126.2M1497.3,344.5L1841.9,399.5M1841.9,399.5L2355.8,481.4M376.9,116.1L370.1,118.5M80.5,125.2L92.5,127.4M370.1,118.5L362.6,121.1M92.5,127.4L105.4,129.7M1823.3,437.6L2407.4,542.3M2407.4,542.3L3449.4,729.1M396.1,117.6L390.0,120.1M55.7,128.6L67.4,131.0M3819.8,899.0L7771.5,1707.8M416.4,119.2L411.2,121.9M27.9,132.3L39.3,135.0M13658.7,3383.7L69924.1,16804.8M461.2,122.8L458.0,125.9M-38.8,141.2L-29.0,144.8M486.0,124.8L484.0,128.1M-79.5,146.7L-70.9,150.8M512.5,126.9L512.0,130.5M-126.5,153.0L-119.8,157.7M512.0,130.5L511.4,134.4M-119.8,157.7L-112.3,163.0M541.0,129.2L542.2,133.0M-181.5,160.4L-177.4,166.0M542.2,133.0L543.5,137.3M-177.4,166.0L-172.9,172.3M574.8,135.8L578.4,140.4M-246.5,175.9L-246.2,183.5M610.3,138.8L616.6,143.9M-330.6,187.9L-336.9,197.4M616.6,143.9L623.7,149.7M-336.9,197.4L-344.2,208.5M658.4,147.6L669.3,154.1M-451.9,215.0L-471.4,229.4M704.5,151.8L719.8,158.9M-602.4,238.1L-642.4,257.5M719.8,158.9L737.9,167.4M-642.4,257.5L-692.5,282.0M776.2,164.3L800.9,173.9M-884.5,297.4L-985.1,334.1M800.9,173.9L831.0,185.5M-985.1,334.1L-1123.6,384.6M872.6,181.2L913.2,194.6M-1463.5,419.2L-1783.9,512.5M913.2,194.6L964.4,211.4M-1783.9,512.5L-2334.3,672.7M964.4,211.4L1031.0,233.2M-2334.3,672.7L-3500.6,1012.2M1008.9,205.1L1078.6,225.0M-3329.9,811.9L-5761.1,1400.7M1078.6,225.0L1171.6,251.6M-5761.1,1400.7L-26414.1,6402.5M1171.6,251.6L1301.8,288.8M-26414.1,6402.5L-69365.8,16804.8M1301.8,288.8L1497.3,344.5M1346.8,274.5L1537.3,322.6M1537.3,322.6L1841.9,399.5M1841.9,399.5L2407.4,542.3M2407.4,542.3L3819.8,899.0M3819.8,899.0L13658.7,3383.7M13658.7,3383.7L66804.0,16804.8M3449.4,729.1L7771.5,1707.8M7771.5,1707.8L74439.3,16804.8" stroke="#9c9890" stroke-opacity="0.120" stroke-width="1" fill="none"/>
<path d="M127.9,126.2L105.4,129.7M343.3,119.3L362.6,121.1M105.4,129.7L80.1,133.5M362.6,121.1L383.3,122.9M80.1,133.5L51.6,137.9M383.3,122.9L405.3,124.9M51.6,137.9L19.1,142.9M405.3,124.9L429.0,127.0M19.1,142.9L-18.2,148.6M429.0,127.0L454.4,129.3M-18.2,148.6L-61.5,155.2M454.4,129.3L481.8,131.8M-61.5,155.2L-112.3,163.0M481.8,131.8L511.4,134.4M-112.3,163.0L-172.9,172.3M511.4,134.4L543.5,137.3M180.2,122.2L162.0,125.1M298.1,118.5L315.6,120.2M162.0,125.1L141.9,128.5M315.6,120.2L334.4,122.0M141.9,128.5L119.3,132.2M334.4,122.0L354.4,123.9M119.3,132.2L93.8,136.4M354.4,123.9L375.8,126.0M-51.0,160.2L-104.0,168.9M479.3,135.9L510.7,138.9M-104.0,168.9L-167.7,179.4M510.7,138.9L545.0,142.2M-167.7,179.4L-246.0,192.3M545.0,142.2L582.5,145.8M-246.0,192.3L-344.2,208.5M582.5,145.8L623.7,149.7M225.8,118.6L211.1,121.2M254.1,117.7L270.0,119.4M211.1,121.2L194.9,124.1M270.0,119.4L287.0,121.1M194.9,124.1L177.0,127.3M287.0,121.1L305.1,123.0M-245.6,202.5L-352.9,221.6M587.2,152.0L632.1,156.6M-352.9,221.6L-495.1,246.9M632.1,156.6L682.0,161.7M-495.1,246.9L-692.5,282.0M682.0,161.7L737.9,167.4M254.1,117.7L241.1,120.3M225.8,118.6L241.1,120.3M241.1,120.3L226.7,123.1M241.1,120.3L257.4,122.1M226.7,123.1L210.8,126.1M257.4,122.1L274.8,124.0M-363.4,237.3L-524.5,268.5M641.9,164.6L697.1,170.7M-524.5,268.5L-757.3,313.7M697.1,170.7L759.6,177.6M-757.3,313.7L-1123.6,384.6M759.6,177.6L831.0,185.5M281.6,116.9L270.0,119.4M196.6,119.5L211.1,121.2M270.0,119.4L257.4,122.1M211.1,121.2L226.7,123.1M-844.4,356.1L-1326.4,458.6M786.2,190.0L868.2,199.9M-1326.4,458.6L-2334.3,672.7M868.2,199.9L964.4,211.4M298.1,118.5L287.0,121.1M180.2,122.2L194.9,124.1M287.0,121.1L274.8,124.0M194.9,124.1L210.8,126.1M-967.5,416.3L-1651.9,577.3M819.5,205.6L915.7,218.2M-1651.9,577.3L-3500.6,1012.2M915.7,218.2L1031.0,233.2M325.2,117.7L315.6,120.2M148.1,123.1L162.0,125.1M315.6,120.2L305.1,123.0M162.0,125.1L177.0,127.3M-2259.5,798.8L-7630.7,2214.3M978.2,242.3L1121.2,262.8M-7630.7,2214.3L-62996.6,16804.8M1121.2,262.8L1301.8,288.8M343.3,119.3L334.4,122.0M127.9,126.2L141.9,128.5M334.4,122.0L324.5,125.0M141.9,128.5L156.9,130.9M-3796.7,1359.4L-55361.3,16804.8M1064.3,275.5L1250.2,305.1M1250.2,305.1L1497.3,344.5M362.6,121.1L354.4,123.9M105.4,129.7L119.3,132.2M1449.8,370.7L1823.3,437.6M390.0,120.1L383.3,122.9M67.4,131.0L80.1,133.5M383.3,122.9L375.8,126.0M80.1,133.5L93.8,136.4M1800.0,485.6L2476.6,624.1M2476.6,624.1L3819.8,899.0M411.2,121.9L405.3,124.9M39.3,135.0L51.6,137.9M405.3,124.9L398.8,128.2M51.6,137.9L65.0,141.1M2574.6,739.7L4445.6,1186.0M4445.6,1186.0L13658.7,3383.7M458.0,125.9L454.4,129.3M-29.0,144.8L-18.2,148.6M454.4,129.3L450.3,133.1M-18.2,148.6L-6.3,152.8M484.0,128.1L481.8,131.8M-70.9,150.8L-61.5,155.2M481.8,131.8L479.3,135.9M-61.5,155.2L-51.0,160.2M511.4,134.4L510.7,138.9M-112.3,163.0L-104.0,168.9M543.5,137.3L545.0,142.2M-172.9,172.3L-167.7,179.4M545.0,142.2L546.7,147.8M-167.7,179.4L-161.8,187.6M578.4,140.4L582.5,145.8M-246.2,183.5L-246.0,192.3M582.5,145.8L587.2,152.0M-246.0,192.3L-245.6,202.5M623.7,149.7L632.1,156.6M-344.2,208.5L-352.9,221.6M632.1,156.6L641.9,164.6M-352.9,221.6L-363.4,237.3M669.3,154.1L682.0,161.7M-471.4,229.4L-495.1,246.9M682.0,161.7L697.1,170.7M-495.1,246.9L-524.5,268.5M737.9,167.4L759.6,177.6M-692.5,282.0L-757.3,313.7M759.6,177.6L786.2,190.0M-757.3,313.7L-844.4,356.1M786.2,190.0L819.5,205.6M-844.4,356.1L-967.5,416.3M831.0,185.5L868.2,199.9M-1123.6,384.6L-1326.4,458.6M868.2,199.9L915.7,218.2M-1326.4,458.6L-1651.9,577.3M915.7,218.2L978.2,242.3M-1651.9,577.3L-2259.5,798.8M1031.0,233.2L1121.2,262.8M-3500.6,1012.2L-7630.7,2214.3M1121.2,262.8L1250.2,305.1M-7630.7,2214.3L-57758.3,16804.8M1250.2,305.1L1449.8,370.7M1449.8,370.7L1800.0,485.6M1497.3,344.5L1823.3,437.6M1823.3,437.6L2476.6,624.1M2476.6,624.1L4445.6,1186.0M4445.6,1186.0L59168.7,16804.8" stroke="#9c9890" stroke-opacity="0.150" stroke-width="1" fill="none"/>
<path d="M93.8,136.4L65.0,141.1M375.8,126.0L398.8,128.2M65.0,141.1L31.9,146.6M398.8,128.2L423.6,130.6M31.9,146.6L-6.3,152.8M423.6,130.6L450.3,133.1M-6.3,152.8L-51.0,160.2M450.3,133.1L479.3,135.9M177.0,127.3L156.9,130.9M305.1,123.0L324.5,125.0M156.9,130.9L134.3,134.9M324.5,125.0L345.2,127.1M134.3,134.9L108.8,139.4M345.2,127.1L367.5,129.4M108.8,139.4L79.6,144.6M367.5,129.4L391.6,131.9M79.6,144.6L46.0,150.6M391.6,131.9L417.6,134.5M46.0,150.6L6.9,157.5M417.6,134.5L445.8,137.4M6.9,157.5L-39.3,165.8M445.8,137.4L476.5,140.6M-39.3,165.8L-94.5,175.6M476.5,140.6L510.0,144.0M-94.5,175.6L-161.8,187.6M510.0,144.0L546.7,147.8M-161.8,187.6L-245.6,202.5M546.7,147.8L587.2,152.0M210.8,126.1L193.0,129.6M274.8,124.0L293.4,126.1M193.0,129.6L173.1,133.4M293.4,126.1L313.4,128.3M-155.0,197.0L-245.3,214.5M548.8,154.3L592.8,159.2M-245.3,214.5L-363.4,237.3M592.8,159.2L641.9,164.6M257.4,122.1L243.4,125.1M226.7,123.1L243.4,125.1M243.4,125.1L227.8,128.4M243.4,125.1L261.2,127.2M227.8,128.4L210.3,132.1M261.2,127.2L280.4,129.5M-244.8,228.8L-376.1,256.7M599.3,167.7L653.6,174.2M-376.1,256.7L-561.8,296.1M653.6,174.2L715.4,181.6M-561.8,296.1L-844.4,356.1M715.4,181.6L786.2,190.0M274.8,124.0L261.2,127.2M210.8,126.1L227.8,128.4M261.2,127.2L246.1,130.8M227.8,128.4L246.1,130.8M-392.2,280.9L-611.0,332.4M667.9,185.8L737.9,195.0M-611.0,332.4L-967.5,416.3M737.9,195.0L819.5,205.6M305.1,123.0L293.4,126.1M177.0,127.3L193.0,129.6M293.4,126.1L280.4,129.5M193.0,129.6L210.3,132.1M-678.5,382.2L-1155.0,507.8M766.3,211.9L862.2,225.7M-1155.0,507.8L-2259.5,798.8M862.2,225.7L978.2,242.3M324.5,125.0L313.4,128.3M156.9,130.9L173.1,133.4M-1475.1,664.0L-3796.7,1359.4M919.4,252.4L1064.3,275.5M354.4,123.9L345.2,127.1M119.3,132.2L134.3,134.9M345.2,127.1L335.0,130.7M134.3,134.9L150.6,137.8M-2145.5,991.2L-15337.8,5568.1M999.5,289.9L1190.3,324.1M-15337.8,5568.1L-47725.9,16804.8M1190.3,324.1L1449.8,370.7M375.8,126.0L367.5,129.4M93.8,136.4L108.8,139.4M1392.5,402.2L1800.0,485.6M398.8,128.2L391.6,131.9M65.0,141.1L79.6,144.6M1769.8,547.8L2574.6,739.7M450.3,133.1L445.8,137.4M-6.3,152.8L6.9,157.5M9860.3,3669.8L46709.1,16804.8M479.3,135.9L476.5,140.6M-51.0,160.2L-39.3,165.8M510.7,138.9L510.0,144.0M-104.0,168.9L-94.5,175.6M510.0,144.0L509.1,149.9M-94.5,175.6L-83.7,183.2M546.7,147.8L548.8,154.3M-161.8,187.6L-155.0,197.0M587.2,152.0L592.8,159.2M-245.6,202.5L-245.3,214.5M592.8,159.2L599.3,167.7M-245.3,214.5L-244.8,228.8M641.9,164.6L653.6,174.2M-363.4,237.3L-376.1,256.7M653.6,174.2L667.9,185.8M-376.1,256.7L-392.2,280.9M697.1,170.7L715.4,181.6M-524.5,268.5L-561.8,296.1M715.4,181.6L737.9,195.0M-561.8,296.1L-611.0,332.4M737.9,195.0L766.3,211.9M-611.0,332.4L-678.5,382.2M819.5,205.6L862.2,225.7M-967.5,416.3L-1155.0,507.8M862.2,225.7L919.4,252.4M-1155.0,507.8L-1475.1,664.0M978.2,242.3L1064.3,275.5M-2259.5,798.8L-3796.7,1359.4M1064.3,275.5L1190.3,324.1M-3796.7,1359.4L-15337.8,5568.1M1190.3,324.1L1392.5,402.2M-15337.8,5568.1L-46150.8,16804.8M1392.5,402.2L1769.8,547.8M1769.8,547.8L2723.8,915.9M2723.8,915.9L9860.3,3669.8M9860.3,3669.8L43898.0,16804.8M1800.0,485.6L2574.6,739.7M2574.6,739.7L5729.4,1774.9M5729.4,1774.9L51533.3,16804.8" stroke="#9c9890" stroke-opacity="0.180" stroke-width="1" fill="none"/>
<path d="M173.1,133.4L150.6,137.8M313.4,128.3L335.0,130.7M150.6,137.8L125.0,142.7M335.0,130.7L358.2,133.2M125.0,142.7L95.7,148.4M358.2,133.2L383.4,136.0M95.7,148.4L61.6,155.0M383.4,136.0L410.8,139.0M61.6,155.0L21.6,162.8M410.8,139.0L440.6,142.3M21.6,162.8L-26.0,172.0M440.6,142.3L473.2,145.9M-26.0,172.0L-83.7,183.2M473.2,145.9L509.1,149.9M-83.7,183.2L-155.0,197.0M509.1,149.9L548.8,154.3M210.3,132.1L190.7,136.2M280.4,129.5L301.1,132.0M190.7,136.2L168.4,141.0M301.1,132.0L323.5,134.6M168.4,141.0L142.9,146.4M323.5,134.6L347.7,137.5M-11.1,179.1L-71.3,191.9M469.5,152.1L508.1,156.8M-71.3,191.9L-147.0,208.0M508.1,156.8L551.1,161.9M-147.0,208.0L-244.8,228.8M551.1,161.9L599.3,167.7M246.1,130.8L229.0,134.8M246.1,130.8L265.8,133.3M229.0,134.8L209.8,139.3M265.8,133.3L287.2,136.1M-137.6,221.0L-244.3,246.1M553.9,170.9L607.1,177.9M-244.3,246.1L-392.2,280.9M607.1,177.9L667.9,185.8M280.4,129.5L265.8,133.3M210.3,132.1L229.0,134.8M265.8,133.3L249.4,137.7M229.0,134.8L249.4,137.7M-243.6,267.6L-412.9,312.2M616.7,190.4L685.6,200.3M-412.9,312.2L-678.5,382.2M685.6,200.3L766.3,211.9M313.4,128.3L301.1,132.0M173.1,133.4L190.7,136.2M301.1,132.0L287.2,136.1M190.7,136.2L209.8,139.3M-440.7,354.1L-777.0,454.9M708.1,218.7L803.3,233.9M-777.0,454.9L-1475.1,664.0M803.3,233.9L919.4,252.4M335.0,130.7L323.5,134.6M150.6,137.8L168.4,141.0M-934.5,571.1L-2145.5,991.2M853.4,263.8L999.5,289.9M367.5,129.4L358.2,133.2M108.8,139.4L125.0,142.7M358.2,133.2L347.7,137.5M125.0,142.7L142.9,146.4M-1226.0,786.2L-4436.0,2109.2M925.2,306.5L1120.1,346.4M-4436.0,2109.2L-40090.6,16804.8M1120.1,346.4L1392.5,402.2M391.6,131.9L383.4,136.0M79.6,144.6L95.7,148.4M383.4,136.0L374.1,140.7M95.7,148.4L113.4,152.7M-1950.2,1320.6L-32455.3,16804.8M1036.6,372.9L1321.9,440.9M1321.9,440.9L1769.8,547.8M445.8,137.4L440.6,142.3M6.9,157.5L21.6,162.8M440.6,142.3L434.6,148.0M21.6,162.8L38.1,168.7M1671.2,750.8L2978.8,1216.9M2978.8,1216.9L9860.3,3669.8M476.5,140.6L473.2,145.9M-39.3,165.8L-26.0,172.0M473.2,145.9L469.5,152.1M-26.0,172.0L-11.1,179.1M3513.2,1847.8L35101.6,16804.8M509.1,149.9L508.1,156.8M-83.7,183.2L-71.3,191.9M548.8,154.3L551.1,161.9M-155.0,197.0L-147.0,208.0M551.1,161.9L553.9,170.9M-147.0,208.0L-137.6,221.0M599.3,167.7L607.1,177.9M-244.8,228.8L-244.3,246.1M607.1,177.9L616.7,190.4M-244.3,246.1L-243.6,267.6M667.9,185.8L685.6,200.3M-392.2,280.9L-412.9,312.2M685.6,200.3L708.1,218.7M-412.9,312.2L-440.7,354.1M766.3,211.9L803.3,233.9M-678.5,382.2L-777.0,454.9M803.3,233.9L853.4,263.8M-777.0,454.9L-934.5,571.1M853.4,263.8L925.2,306.5M-934.5,571.1L-1226.0,786.2M3513.2,1847.8L28627.3,16804.8M919.4,252.4L999.5,289.9M-1475.1,664.0L-2145.5,991.2M999.5,289.9L1120.1,346.4M-2145.5,991.2L-4436.0,2109.2M1120.1,346.4L1321.9,440.9M-4436.0,2109.2L-34543.3,16804.8M1321.9,440.9L1729.1,631.6M1729.1,631.6L2978.8,1216.9M2978.8,1216.9L36262.7,16804.8" stroke="#9c9890" stroke-opacity="0.210" stroke-width="1" fill="none"/>
<path d="M142.9,146.4L113.4,152.7M347.7,137.5L374.1,140.7M113.4,152.7L78.9,160.0M374.1,140.7L403.0,144.2M78.9,160.0L38.1,168.7M403.0,144.2L434.6,148.0M38.1,168.7L-11.1,179.1M434.6,148.0L469.5,152.1M209.8,139.3L187.8,144.5M287.2,136.1L310.5,139.2M187.8,144.5L162.5,150.4M310.5,139.2L335.8,142.5M162.5,150.4L133.0,157.3M335.8,142.5L363.5,146.1M133.0,157.3L98.3,165.5M363.5,146.1L394.0,150.1M98.3,165.5L56.7,175.3M394.0,150.1L427.7,154.5M56.7,175.3L6.1,187.2M427.7,154.5L465.2,159.4M6.1,187.2L-57.0,202.0M465.2,159.4L507.0,164.8M-57.0,202.0L-137.6,221.0M507.0,164.8L553.9,170.9M249.4,137.7L230.6,142.6M249.4,137.7L271.5,140.8M230.6,142.6L209.1,148.3M271.5,140.8L295.6,144.3M-40.1,213.9L-126.2,236.6M505.6,174.5L557.3,181.9M-126.2,236.6L-243.6,267.6M557.3,181.9L616.7,190.4M287.2,136.1L271.5,140.8M209.8,139.3L230.6,142.6M271.5,140.8L253.4,146.2M230.6,142.6L253.4,146.2M-112.3,255.8L-242.7,294.9M561.5,195.4L628.8,206.1M-242.7,294.9L-440.7,354.1M628.8,206.1L708.1,218.7M323.5,134.6L310.5,139.2M168.4,141.0L187.8,144.5M310.5,139.2L295.6,144.3M187.8,144.5L209.1,148.3M-241.6,330.7L-479.8,413.3M644.2,226.3L737.9,243.0M-479.8,413.3L-934.5,571.1M737.9,243.0L853.4,263.8M347.7,137.5L335.8,142.5M142.9,146.4L162.5,150.4M-539.3,503.1L-1226.0,786.2M778.9,276.6L925.2,306.5M374.1,140.7L363.5,146.1M113.4,152.7L133.0,157.3M-640.1,655.6L-1950.2,1320.6M839.0,325.7L1036.6,372.9M434.6,148.0L427.7,154.5M38.1,168.7L56.7,175.3M-1539.2,2014.0L-17184.6,16804.8M1117.4,553.4L1671.2,750.8M469.5,152.1L465.2,159.4M-11.1,179.1L6.1,187.2M1582.3,933.6L3513.2,1847.8M508.1,156.8L507.0,164.8M-71.3,191.9L-57.0,202.0M507.0,164.8L505.6,174.5M-57.0,202.0L-40.1,213.9M-112.3,4421.1L-1914.0,16804.8M1428.8,1249.5L5344.7,4010.0M5344.7,4010.0L23494.2,16804.8M553.9,170.9L557.3,181.9M-137.6,221.0L-126.2,236.6M557.3,181.9L561.5,195.4M-126.2,236.6L-112.3,255.8M1099.5,1927.2L5721.4,16804.8M1099.5,1927.2L11886.7,16804.8M616.7,190.4L628.8,206.1M-243.6,267.6L-242.7,294.9M628.8,206.1L644.2,226.3M-242.7,294.9L-241.6,330.7M1428.8,1249.5L13356.7,16804.8M-112.3,4421.1L279.2,16804.8M708.1,218.7L737.9,243.0M-440.7,354.1L-479.8,413.3M737.9,243.0L778.9,276.6M-479.8,413.3L-539.3,503.1M778.9,276.6L839.0,325.7M-539.3,503.1L-640.1,655.6M839.0,325.7L935.8,404.9M-640.1,655.6L-849.0,971.2M935.8,404.9L1117.4,553.4M-849.0,971.2L-1539.2,2014.0M1117.4,553.4L1582.3,933.6M-1539.2,2014.0L-11328.3,16804.8M1582.3,933.6L5344.7,4010.0M5344.7,4010.0L20992.0,16804.8M925.2,306.5L1036.6,372.9M-1226.0,786.2L-1950.2,1320.6M1036.6,372.9L1233.0,489.8M-1950.2,1320.6L-6839.2,4927.9M1233.0,489.8L1671.2,750.8M-6839.2,4927.9L-22935.8,16804.8M1671.2,750.8L3513.2,1847.8" stroke="#9c9890" stroke-opacity="0.240" stroke-width="1" fill="none"/>
<path d="M209.1,148.3L184.2,154.8M295.6,144.3L322.1,148.1M184.2,154.8L154.9,162.6M322.1,148.1L351.3,152.3M154.9,162.6L120.1,171.7M351.3,152.3L383.6,156.9M120.1,171.7L77.9,182.9M383.6,156.9L419.7,162.1M77.9,182.9L25.8,196.6M419.7,162.1L460.0,167.9M25.8,196.6L-40.1,213.9M460.0,167.9L505.6,174.5M253.4,146.2L232.6,152.5M253.4,146.2L278.5,150.2M232.6,152.5L208.2,159.8M278.5,150.2L306.2,154.7M48.9,207.5L-20.0,228.1M453.8,178.2L503.9,186.2M-20.0,228.1L-112.3,255.8M503.9,186.2L561.5,195.4M295.6,144.3L278.5,150.2M209.1,148.3L232.6,152.5M-94.9,279.8L-241.6,330.7M566.8,212.4L644.2,226.3M335.8,142.5L322.1,148.1M162.5,150.4L184.2,154.8M322.1,148.1L306.2,154.7M184.2,154.8L208.2,159.8M-72.5,310.7L-240.0,379.8M573.7,234.6L664.9,253.2M-240.0,379.8L-539.3,503.1M664.9,253.2L778.9,276.6M363.5,146.1L351.3,152.3M133.0,157.3L154.9,162.6M-237.8,451.3L-640.1,655.6M694.0,291.2L839.0,325.7M427.7,154.5L419.7,162.1M56.7,175.3L77.9,182.9M-227.6,774.0L-1539.2,2014.0M811.4,444.3L1117.4,553.4M465.2,159.4L460.0,167.9M6.1,187.2L25.8,196.6M460.0,167.9L453.8,178.2M25.8,196.6L48.9,207.5M171.6,647.4L-211.5,1284.0M654.4,494.2L961.0,639.4M-211.5,1284.0L-9549.3,16804.8M961.0,639.4L1582.3,933.6M505.6,174.5L503.9,186.2M-40.1,213.9L-20.0,228.1M392.4,952.0L-112.3,4421.1M737.6,762.2L1428.8,1249.5M561.5,195.4L566.8,212.4M-112.3,255.8L-94.9,279.8M566.8,212.4L573.7,234.6M-94.9,279.8L-72.5,310.7M654.4,494.2L737.6,762.2M171.6,647.4L392.4,952.0M737.6,762.2L1099.5,1927.2M392.4,952.0L1099.5,1927.2M644.2,226.3L664.9,253.2M-241.6,330.7L-240.0,379.8M664.9,253.2L694.0,291.2M-240.0,379.8L-237.8,451.3M694.0,291.2L737.8,348.3M-237.8,451.3L-234.2,565.0M737.8,348.3L811.4,444.3M-234.2,565.0L-227.6,774.0M811.4,444.3L961.0,639.4M-227.6,774.0L-211.5,1284.0M961.0,639.4L1428.8,1249.5M-211.5,1284.0L-112.3,4421.1" stroke="#9c9890" stroke-opacity="0.270" stroke-width="1" fill="none"/>
<path d="M208.2,159.8L179.4,168.4M306.2,154.7L337.0,159.6M179.4,168.4L144.7,178.8M337.0,159.6L371.4,165.0M144.7,178.8L102.2,191.5M371.4,165.0L410.0,171.2M102.2,191.5L48.9,207.5M410.0,171.2L453.8,178.2M278.5,150.2L258.6,157.1M232.6,152.5L258.6,157.1M258.6,157.1L235.1,165.3M258.6,157.1L287.6,162.3M235.1,165.3L207.1,175.0M287.6,162.3L320.1,168.2M207.1,175.0L172.9,186.9M320.1,168.2L356.7,174.7M172.9,186.9L130.5,201.6M356.7,174.7L398.4,182.2M130.5,201.6L76.2,220.4M398.4,182.2L446.3,190.8M76.2,220.4L4.4,245.3M446.3,190.8L501.7,200.7M4.4,245.3L-94.9,279.8M501.7,200.7L566.8,212.4M306.2,154.7L287.6,162.3M208.2,159.8L235.1,165.3M287.6,162.3L265.4,171.5M235.1,165.3L265.4,171.5M265.4,171.5L238.6,182.5M265.4,171.5L299.7,178.5M238.6,182.5L205.5,196.2M299.7,178.5L338.9,186.5M205.5,196.2L163.6,213.4M338.9,186.5L384.1,195.8M163.6,213.4L109.0,236.0M384.1,195.8L436.8,206.6M109.0,236.0L34.6,266.6M436.8,206.6L499.0,219.3M34.6,266.6L-72.5,310.7M499.0,219.3L573.7,234.6M351.3,152.3L337.0,159.6M154.9,162.6L179.4,168.4M337.0,159.6L320.1,168.2M179.4,168.4L207.1,175.0M320.1,168.2L299.7,178.5M207.1,175.0L238.6,182.5M299.7,178.5L274.8,191.2M238.6,182.5L274.8,191.2M274.8,191.2L243.5,207.0M274.8,191.2L316.7,201.2M243.5,207.0L203.1,227.5M316.7,201.2L365.9,212.9M203.1,227.5L149.1,254.9M365.9,212.9L424.5,226.9M149.1,254.9L72.9,293.6M424.5,226.9L495.5,243.8M72.9,293.6L-42.5,352.2M495.5,243.8L583.1,264.7M-42.5,352.2L-237.8,451.3M583.1,264.7L694.0,291.2M419.7,162.1L410.0,171.2M77.9,182.9L102.2,191.5M410.0,171.2L398.4,182.2M102.2,191.5L130.5,201.6M398.4,182.2L384.1,195.8M130.5,201.6L163.6,213.4M384.1,195.8L365.9,212.9M163.6,213.4L203.1,227.5M365.9,212.9L342.3,235.3M203.1,227.5L251.0,244.6M342.3,235.3L310.1,265.6M251.0,244.6L310.1,265.6M310.1,265.6L263.9,309.3M310.1,265.6L385.1,292.4M263.9,309.3L191.9,377.5M385.1,292.4L483.3,327.4M191.9,377.5L63.7,498.6M483.3,327.4L617.4,375.2M63.7,498.6L-227.6,774.0M617.4,375.2L811.4,444.3M453.8,178.2L446.3,190.8M48.9,207.5L76.2,220.4M446.3,190.8L436.8,206.6M76.2,220.4L109.0,236.0M436.8,206.6L424.5,226.9M109.0,236.0L149.1,254.9M424.5,226.9L408.2,254.1M149.1,254.9L199.3,278.7M408.2,254.1L385.1,292.4M199.3,278.7L263.9,309.3M385.1,292.4L350.3,350.2M263.9,309.3L350.3,350.2M350.3,350.2L291.6,447.8M350.3,350.2L471.6,407.7M291.6,447.8L171.6,647.4M471.6,407.7L654.4,494.2M503.9,186.2L501.7,200.7M-20.0,228.1L4.4,245.3M501.7,200.7L499.0,219.3M4.4,245.3L34.6,266.6M499.0,219.3L495.5,243.8M34.6,266.6L72.9,293.6M495.5,243.8L490.5,277.6M72.9,293.6L123.1,329.0M490.5,277.6L483.3,327.4M123.1,329.0L191.9,377.5M483.3,327.4L471.6,407.7M191.9,377.5L291.6,447.8M471.6,407.7L449.6,559.1M291.6,447.8L449.6,559.1M449.6,559.1L392.4,952.0M449.6,559.1L737.6,762.2M573.7,234.6L583.1,264.7M-72.5,310.7L-42.5,352.2M583.1,264.7L596.5,307.9M-42.5,352.2L-0.2,410.5M596.5,307.9L617.4,375.2M-0.2,410.5L63.7,498.6M617.4,375.2L654.4,494.2M63.7,498.6L171.6,647.4" stroke="#9c9890" stroke-opacity="0.300" stroke-width="1" fill="none"/>
<path d="M-227.3,72.5L58316.6,16804.8" stroke="#f0344e" stroke-width="1.2"/>
<path d="M514.8,70.3L-24820.0,16804.8" stroke="#3b8ee8" stroke-width="1.1"/>
<path d="M288.4,872.8L288.4,-71045.8" stroke="#8ad41c" stroke-width="1"/>
<path d="M195.3,167.7L273.8,143.2L372.3,157.7L312.7,194.5Z" fill="#ffffff"/>
<path d="M195.3,167.7L312.7,194.5L308.1,323.4L209.7,278.1Z" fill="#effbfd"/>
<path d="M312.7,194.5L372.3,157.7L360.4,260.2L308.1,323.4Z" fill="#c2ddef"/>
<path d="M203.1,227.5L310.1,265.6" stroke="#505458" stroke-opacity="0.75" stroke-width="1" stroke-dasharray="3 3"/>
<path d="M365.9,212.9L310.1,265.6" stroke="#505458" stroke-opacity="0.35" stroke-width="1" stroke-dasharray="3 3"/>
<path d="M273.8,143.2L275.6,233.2" stroke="#ff8c00" stroke-opacity="0.28" stroke-width="1"/>
<path d="M275.6,233.2L209.7,278.1" stroke="#ff8c00" stroke-opacity="0.28" stroke-width="1"/>
<path d="M275.6,233.2L360.4,260.2" stroke="#ff8c00" stroke-opacity="0.28" stroke-width="1"/>
<path d="M288.4,162.5L288.4,-71045.8" stroke="#8ad41c" stroke-width="1.4"/>
<path d="M342.3,235.3L58316.6,16804.8" stroke="#f0344e" stroke-width="1.6"/>
<path d="M251.0,244.6L-24820.0,16804.8" stroke="#3b8ee8" stroke-width="1.6"/>
<path d="M195.3,167.7L273.8,143.2L372.3,157.7L360.4,260.2L308.1,323.4L209.7,278.1Z" fill="none" stroke="#1a1a1a" stroke-opacity="0.55" stroke-width="3.2" stroke-linejoin="round"/>
<path d="M195.3,167.7L273.8,143.2" stroke="#ff8a05" stroke-width="1.7" stroke-linecap="round"/>
<path d="M273.8,143.2L372.3,157.7" stroke="#ff8a05" stroke-width="1.7" stroke-linecap="round"/>
<path d="M372.3,157.7L312.7,194.5" stroke="#ff8a05" stroke-width="1.7" stroke-linecap="round"/>
<path d="M312.7,194.5L195.3,167.7" stroke="#ff8a05" stroke-width="1.7" stroke-linecap="round"/>
<path d="M195.3,167.7L209.7,278.1" stroke="#ff8a05" stroke-width="1.7" stroke-linecap="round"/>
<path d="M312.7,194.5L308.1,323.4" stroke="#ff8a05" stroke-width="1.7" stroke-linecap="round"/>
<path d="M372.3,157.7L360.4,260.2" stroke="#ff8a05" stroke-width="1.7" stroke-linecap="round"/>
<path d="M209.7,278.1L308.1,323.4" stroke="#ff8a05" stroke-width="1.7" stroke-linecap="round"/>
<path d="M308.1,323.4L360.4,260.2" stroke="#ff8a05" stroke-width="1.7" stroke-linecap="round"/>
<path d="M288.4,219.9L400.2,251.8" stroke="#f53352" stroke-opacity="0.45" stroke-width="2"/>
<path d="M288.4,219.9L288.4,102.3" stroke="#87d603" stroke-opacity="0.45" stroke-width="2"/>
<path d="M288.4,219.9L205.9,274.3" stroke="#298cf5" stroke-opacity="0.45" stroke-width="2"/>
<path d="M311.4,135.4L310.5,134.6L309.5,133.9L308.4,133.3L307.4,132.6L306.3,132.1L305.2,131.6L304.0,131.1L302.8,130.8L301.6,130.4L300.4,130.2L299.2,130.0L297.9,129.9L296.6,129.8L295.3,129.8L294.0,129.9L292.6,130.0L291.2,130.2L289.8,130.5L288.4,130.9L288.4,130.9L287.0,131.3L285.5,131.8L284.0,132.4L282.6,133.1L281.1,133.8L279.6,134.6L278.0,135.5L276.5,136.5L275.0,137.6L273.5,138.7L271.9,139.9L270.4,141.2L268.8,142.6L267.3,144.1L265.7,145.6L264.2,147.2L262.7,148.9L261.2,150.7L259.7,152.5L258.2,154.4L256.7,156.4L255.2,158.5L253.8,160.6L252.3,162.8L250.9,165.1L249.6,167.4L248.2,169.8L246.9,172.2L245.6,174.7L244.3,177.2L243.1,179.8L241.9,182.5L240.8,185.1L239.7,187.9L238.6,190.6L237.6,193.4L236.6,196.2L235.7,199.1L234.8,201.9L233.9,204.8L233.1,207.7L232.4,210.6L231.7,213.5L231.1,216.4L230.5,219.3L230.0,222.2L229.5,225.1L229.1,228.0L228.7,230.9L228.4,233.7L228.1,236.5L227.9,239.3L227.8,242.1L227.7,244.8L227.6,247.5L227.6,250.1L227.7,252.7L227.8,255.3L228.0,257.8L228.2,260.2L228.5,262.6L228.8,265.0L229.2,267.3L229.6,269.5L230.1,271.7L230.6,273.7L231.1,275.8L231.7,277.7L232.4,279.6L233.1,281.5L233.8,283.2L234.5,284.9L235.3,286.5L236.1,288.1L237.0,289.5L237.9,290.9L238.8,292.2L239.7,293.5L240.7,294.7L241.7,295.8L242.7,296.8L243.8,297.8L244.8,298.6L245.9,299.5L247.0,300.2L248.2,300.9L249.3,301.5L250.4,302.0L251.6,302.5L252.8,302.9L254.0,303.2L255.2,303.5L256.4,303.7L257.6,303.9L258.8,303.9L260.0,304.0L261.3,303.9L262.5,303.8L263.7,303.7" fill="none" stroke="#f53352" stroke-opacity="0.45" stroke-width="4"/>
<path d="M337.0,292.3L338.6,291.6L340.2,290.9L341.9,290.2L343.4,289.3L345.0,288.5L346.5,287.5L348.0,286.5L349.5,285.5L351.0,284.4L352.4,283.2L353.8,282.0L355.1,280.7L356.5,279.4L357.7,278.0L359.0,276.5L360.2,275.0L361.3,273.4L362.4,271.8L363.5,270.1L364.5,268.4L365.5,266.6L366.4,264.8L367.3,262.9L368.1,261.0L368.9,259.0L369.6,257.0L370.2,254.9L370.8,252.8L371.3,250.6L371.8,248.4L372.2,246.2L372.5,243.9L372.5,243.9L372.8,241.6L373.0,239.2L373.1,236.9L373.2,234.4L373.2,232.0L373.1,229.5L373.0,227.1L372.8,224.6L372.5,222.0L372.2,219.5L371.7,216.9L371.2,214.4L370.7,211.8L370.1,209.3L369.3,206.7L368.6,204.1L367.7,201.5L366.8,199.0L365.8,196.4L364.8,193.9L363.7,191.4L362.5,188.9L361.3,186.4L360.0,184.0L358.6,181.5L357.2,179.1L355.7,176.8L354.1,174.4L352.5,172.2L350.9,169.9L349.2,167.7L347.4,165.6L345.6,163.5L343.8,161.4L341.9,159.4L340.0,157.4L338.0,155.6L336.0,153.7L334.0,152.0L331.9,150.3L329.8,148.6L327.7,147.0L325.5,145.5L323.4,144.1L321.2,142.7L319.0,141.4L316.8,140.2L314.5,139.0L312.3,137.9L310.1,136.9L307.8,136.0L305.6,135.1L303.3,134.3L301.1,133.6L298.9,132.9L296.6,132.4L294.4,131.9L292.2,131.4L290.0,131.1L287.9,130.8L285.7,130.6L283.6,130.5L281.4,130.4L279.4,130.4L277.3,130.5L275.2,130.6L273.2,130.8L271.3,131.1L269.3,131.4L267.4,131.8L265.5,132.3L263.6,132.8L261.8,133.4L260.0,134.0L258.3,134.7L256.6,135.5L254.9,136.3L253.3,137.1L251.7,138.1L250.2,139.0L248.7,140.0L247.2,141.1L245.8,142.2L244.4,143.3L243.1,144.5L241.8,145.7L240.6,147.0" fill="none" stroke="#298cf5" stroke-opacity="0.45" stroke-width="4"/>
<path d="M375.5,220.0L376.1,221.0L376.5,222.0L377.0,223.0L377.3,224.1L377.6,225.1L377.9,226.2L378.1,227.3L378.2,228.3L378.2,229.4L378.2,230.5L378.1,231.6L378.0,232.7L377.8,233.8L377.5,234.9L377.1,236.1L376.7,237.2L376.2,238.3L375.6,239.4L374.9,240.5L374.2,241.7L373.4,242.8L372.5,243.9L372.5,243.9L371.5,245.0L370.5,246.1L369.4,247.2L368.2,248.3L366.9,249.4L365.5,250.4L364.1,251.5L362.5,252.5L360.9,253.5L359.2,254.5L357.5,255.5L355.6,256.5L353.7,257.4L351.7,258.3L349.7,259.2L347.5,260.1L345.3,260.9L343.0,261.7L340.7,262.5L338.3,263.3L335.8,264.0L333.3,264.6L330.7,265.3L328.0,265.9L325.3,266.5L322.6,267.0L319.8,267.5L317.0,267.9L314.1,268.3L311.2,268.7L308.3,269.0L305.3,269.3L302.3,269.5L299.3,269.7L296.3,269.9L293.3,270.0L290.3,270.0L287.2,270.0L284.2,270.0L281.2,269.9L278.2,269.8L275.2,269.6L272.2,269.4L269.2,269.1L266.3,268.8L263.4,268.4L260.5,268.0L257.6,267.6L254.8,267.1L252.1,266.6L249.4,266.0L246.7,265.4L244.1,264.8L241.6,264.1L239.1,263.4L236.7,262.7L234.3,261.9L232.0,261.1L229.8,260.3L227.6,259.4L225.6,258.5L223.5,257.6L221.6,256.7L219.8,255.7L218.0,254.8L216.3,253.8L214.6,252.7L213.1,251.7L211.6,250.7L210.2,249.6L208.9,248.5L207.7,247.5L206.6,246.4L205.5,245.3L204.5,244.2L203.6,243.1L202.8,241.9L202.0,240.8L201.3,239.7L200.7,238.6L200.2,237.4L199.8,236.3L199.4,235.2L199.1,234.1L198.9,233.0L198.7,231.9L198.6,230.8L198.6,229.7L198.6,228.6L198.7,227.5L198.9,226.4L199.1,225.4L199.4,224.3L199.7,223.3L200.1,222.3L200.6,221.2L201.1,220.2" fill="none" stroke="#87d603" stroke-opacity="0.45" stroke-width="4"/>
<path d="M274.1,205.9L273.7,189.5L262.9,194.9L263.5,211.8Z" fill="#f53352" fill-opacity="0.45"/>
<path d="M309.7,203.0L324.9,206.7L325.8,190.2L310.2,186.9Z" fill="#298cf5" fill-opacity="0.45"/>
<path d="M295.9,235.6L311.1,240.3L301.8,248.0L286.2,242.9Z" fill="#87d603" fill-opacity="0.45"/>
<path d="M402.6,243.5L435.8,262.0L397.8,260.2L397.5,259.8L397.4,258.9L397.4,257.5L397.7,255.7L398.1,253.6L398.7,251.4L399.4,249.2L400.1,247.2L400.9,245.5L401.6,244.3L402.2,243.6Z" fill="#f53352" fill-opacity="0.6"/>
<path d="M279.9,102.2L288.4,66.1L296.9,102.3L296.5,102.6L295.6,102.8L294.1,103.0L292.3,103.1L290.2,103.2L287.9,103.2L285.7,103.1L283.6,103.0L282.0,102.9L280.7,102.7L280.0,102.5Z" fill="#87d603" fill-opacity="0.6"/>
<path d="M210.3,282.9L175.3,294.6L200.3,266.4L201.5,265.7L203.1,265.6L204.8,266.2L206.7,267.2L208.5,268.8L210.1,270.8L211.5,273.0L212.4,275.3L212.9,277.5L213.0,279.5L212.5,281.1L211.6,282.3Z" fill="#298cf5" fill-opacity="0.6"/>
</g></svg>
<!--/VP-->
<div class="a" style="left:523px;top:114px;width:104px;height:26px;background:#7b8c9e"></div>
<div class="a" style="left:533px;top:119px;width:4px;height:4px;border-radius:50%;background:#e4e8ec"></div>
<div class="a" style="left:533px;top:126px;width:4px;height:4px;border-radius:50%;background:#e4e8ec"></div>
<div class="a" style="left:533px;top:133px;width:4px;height:4px;border-radius:50%;background:#e4e8ec"></div>
<div class="t" style="left:546px;top:119px;letter-spacing:0.4px;color:#dfe4ea">Perspective</div>
<svg class="a" style="left:1011px;top:106px" width="80" height="80" viewBox="0 0 80 80">
<circle cx="14" cy="32.7" r="5" fill="#8a1f2e"/><circle cx="55" cy="29.6" r="5" fill="#1d4f8f"/>
<path d="M39 39L39 14" stroke="#87d603" stroke-width="2"/><path d="M39 39L64 46.7" stroke="#f53352" stroke-width="2.2"/><path d="M39 39L23 50" stroke="#298cf5" stroke-width="2.2"/>
<circle cx="39" cy="14" r="8" fill="#87d603"/><circle cx="64" cy="46.7" r="8" fill="#f53352"/><circle cx="23" cy="50" r="8" fill="#298cf5"/>
<circle cx="39" cy="66" r="5" fill="#4e7a0c"/>
<g fill="none" stroke="#3a3a3a" stroke-width="1.3"><path d="M35.5 9l3.5 5 3.5-5M39 14v5"/><path d="M60.5 42l7 9.5M67.5 42l-7 9.5"/><path d="M19.5 45h7l-7 9.5h7"/></g>
</svg>
<svg class="a" style="left:520px;top:80px" width="14" height="14" viewBox="0 0 14 14"><path d="M1 1l11.5 4.2-4.6 1.6 4.2 4.2-1.3 1.3-4.2-4.2-1.6 4.6z" fill="#6c9ee8"/></svg>
<div class="a" style="left:546px;top:74px;width:1px;height:26px;background:#4a5163"></div>
<svg class="a" style="left:560px;top:80px" width="14" height="14" viewBox="0 0 14 14"><g fill="#e6e7ea"><circle cx="7" cy="7" r="2.3"/><path d="M7 0L9.8 2.8 8.6 4 7 2.4 5.4 4 4.2 2.8z"/><path d="M7 14L4.2 11.2 5.4 10 7 11.6 8.6 10 9.8 11.2z"/><path d="M0 7L2.8 4.2 4 5.4 2.4 7 4 8.6 2.8 9.8z"/><path d="M14 7L11.2 9.8 10 8.6 11.6 7 10 5.4 11.2 4.2z"/></g></svg>
<svg class="a" style="left:592px;top:80px" width="14" height="14" viewBox="0 0 14 14"><g fill="none" stroke="#e6e7ea" stroke-width="2"><path d="M3.2 11.2A5.8 5.8 0 1 1 11.6 10.5"/></g><circle cx="7" cy="7" r="2" fill="#e6e7ea"/><path d="M1 9.5h4.5V14H1z" fill="#e6e7ea"/></svg>
<svg class="a" style="left:624px;top:80px" width="14" height="14" viewBox="0 0 14 14"><g fill="#e6e7ea"><circle cx="7" cy="7" r="1.9"/><path d="M8 0H14V6z"/><path d="M0 8V14H6z"/></g><path d="M12 2L9.3 4.7M2 12L4.7 9.3" stroke="#e6e7ea" stroke-width="2.2"/></svg>
<div class="a" style="left:650px;top:74px;width:1px;height:26px;background:#4a5163"></div>
<svg class="a" style="left:664px;top:80px" width="16" height="15" viewBox="0 0 16 15"><path d="M0 0H11V6.5L8 5.5 9 14H0z" fill="#e6e7ea"/><path d="M2 2H9V3.6H2zM2 6.8H7V8.4H2zM2 11H6.5V12.4H2z" fill="#333b4f"/><path d="M6.5 6l8.5 3.2-3.4 1.2 2.8 2.8-1.3 1.3-2.8-2.8L9.2 15z" fill="#333b4f" stroke="#333b4f" stroke-width="1.5"/><path d="M6.5 6l8.5 3.2-3.4 1.2 2.8 2.8-1.3 1.3-2.8-2.8L9.2 15z" fill="#e6e7ea"/></svg>
<svg class="a" style="left:696px;top:80px" width="13" height="14" viewBox="0 0 13 14"><path d="M3 6.5V4.5a3.5 3.5 0 0 1 7 0v2" fill="none" stroke="#e6e7ea" stroke-width="2"/><path d="M0.5 6.5h12V14H0.5z" fill="#e6e7ea"/><rect x="5.5" y="8.5" width="2" height="3" fill="#333b4f"/></svg>
<svg class="a" style="left:728px;top:80px" width="14" height="14" viewBox="0 0 14 14"><path d="M6 2H12V8H8V12H2V6H6z" fill="#80848f"/><path d="M7 3h4v4H7z" fill="#333b4f"/><g fill="#fff"><rect x="0" y="0" width="2.2" height="2.2"/><rect x="11.8" y="0" width="2.2" height="2.2"/><rect x="0" y="11.8" width="2.2" height="2.2"/><rect x="11.8" y="11.8" width="2.2" height="2.2"/></g></svg>
<div class="a" style="left:754px;top:74px;width:1px;height:26px;background:#4a5163"></div>
<svg class="a" style="left:768px;top:80px" width="14" height="14" viewBox="0 0 14 14"><path d="M7 0.3L13.5 3.6V10.4L7 13.7 0.5 10.4V3.6z" fill="#e6e7ea"/><path d="M4.5 3.7L7 2.4 9.5 3.7 7 5z" fill="#333b4f"/><path d="M2.5 6v3.3l2.2 1.1V7.2z" fill="#333b4f"/></svg>
<svg class="a" style="left:801px;top:81px" width="13" height="13" viewBox="0 0 13 13"><g fill="#fff"><rect x="0" y="1" width="2.2" height="2.2"/><rect x="6" y="1" width="2.2" height="2.2"/><rect x="0" y="7" width="2.2" height="2.2"/></g><path d="M5.5 13V9.5a3 3 0 0 1 6 0V13" fill="none" stroke="#e6e7ea" stroke-width="2"/></svg>
<div class="a" style="left:826px;top:74px;width:1px;height:26px;background:#4a5163"></div>
<svg class="a" style="left:840px;top:80px" width="14" height="13" viewBox="0 0 14 13"><g fill="#8c6670"><circle cx="3.3" cy="5" r="3"/><circle cx="8" cy="3.3" r="3.2"/><rect x="2" y="5" width="8" height="6.5" rx="0.5"/><path d="M9.5 8l4.5-3v7.5l-4.5-3z"/></g></svg>
<div class="a" style="left:866px;top:74px;width:1px;height:26px;background:#4a5163"></div>
<div class="t" style="left:879px;top:79px;letter-spacing:0.8px">Transform</div>
<div class="t" style="left:965px;top:79px">View</div>
<svg class="a" style="left:1013px;top:80px" width="14" height="14" viewBox="0 0 14 14"><g stroke="#fc9c9c" stroke-width="2" fill="none"><path d="M2 2h10v10H2zM2 2l10 10"/></g><g fill="#fc9c9c"><circle cx="2" cy="2" r="1.8"/><circle cx="12" cy="2" r="1.8"/><circle cx="2" cy="12" r="1.8"/><circle cx="12" cy="12" r="1.8"/></g></svg>
<div class="t" style="left:1031px;top:79px;letter-spacing:0.6px">Mesh</div>
<div class="pnl" style="left:512px;top:557px;width:581px;height:34px"></div>
<div class="t" style="left:522px;top:565px;letter-spacing:0.9px">Output</div>
<div class="t" style="left:585px;top:565px;letter-spacing:0.85px">Debugger</div>
<div class="t" style="left:670px;top:565px;letter-spacing:0.75px">Audio</div>
<div class="t" style="left:725px;top:565px;letter-spacing:0.7px">Animation</div>
<div class="t" style="left:966px;top:565px;letter-spacing:0.5px;color:#8a8e97">3.3.2.stable.mono</div>

<!-- INSPECTOR -->
<div class="tab" style="left:1103px;top:43px;width:82px;height:28px"></div>
<div class="tabu" style="left:1185px;top:43px;width:56px;height:28px"></div>
<div class="t" style="left:1112px;top:48px;letter-spacing:0.8px">Inspector</div>
<div class="t" style="left:1196px;top:48px;letter-spacing:0.9px;color:#757982">Node</div>
<div class="dots" style="left:1365px;top:47px"><i style="top:0"></i><i style="top:6px"></i><i style="top:12px"></i></div>
<div class="pnl" style="left:1103px;top:71px;width:272px;height:520px"></div><div class="a" style="left:1103px;top:69px;width:82px;height:3px;background:#333b4f"></div>
<svg class="a" style="left:1114px;top:80px" width="16" height="16" viewBox="0 0 16 16"><path d="M1 1h8l4 4v4H9v6H1z" fill="#e6e7ea"/><path d="M9 1v4h4" fill="#333b4f" opacity="0.35"/><path d="M11.5 9v6M8.5 12h6" stroke="#5fe0a0" stroke-width="2.4"/></svg>
<svg class="a" style="left:1146px;top:81px" width="15" height="14" viewBox="0 0 15 14"><path d="M1.8 13V2.2Q1.8 1 3 1H5.5L7 2.8H10" fill="none" stroke="#e6e7ea" stroke-width="1.5"/><path d="M4 6H14L12.8 13H2.2z" fill="#e6e7ea"/></svg>
<svg class="a" style="left:1178px;top:81px" width="14" height="14" viewBox="0 0 14 14"><path d="M0 1Q0 0 1 0H11L14 3V13Q14 14 13 14H1Q0 14 0 13z" fill="#80848f"/><rect x="3" y="0" width="2" height="4" fill="#333b4f"/><rect x="3" y="0" width="7" height="4.5" fill="none"/><circle cx="7" cy="10" r="2" fill="#333b4f"/></svg>
<svg class="a" style="left:1300px;top:80px" width="10" height="16"><path d="M7.5 1.5L2.5 8l5 6.5" fill="none" stroke="#e6e7ea" stroke-width="1.6"/></svg>
<svg class="a" style="left:1324px;top:80px" width="10" height="16"><path d="M2.5 1.5L7.5 8l-5 6.5" fill="none" stroke="#80848f" stroke-width="1.6"/></svg>
<svg class="a" style="left:1350px;top:81px" width="14" height="14" viewBox="0 0 14 14"><path d="M3.5 4.3A5.3 5.3 0 1 1 6.5 12.8" fill="none" stroke="#e6e7ea" stroke-width="1.8"/><path d="M0 4.5L5.5 3.2 4.8 8.8z" fill="#e6e7ea"/><path d="M8 3.5V7h3" fill="none" stroke="#e6e7ea" stroke-width="1.6"/></svg>
<svg class="a" style="left:1114px;top:111px" width="14" height="14" viewBox="0 0 14 14"><g stroke="#fc9c9c" stroke-width="2" fill="none"><path d="M2 2h10v10H2zM2 2l10 10"/></g><g fill="#fc9c9c"><circle cx="2" cy="2" r="1.8"/><circle cx="12" cy="2" r="1.8"/><circle cx="2" cy="12" r="1.8"/><circle cx="12" cy="12" r="1.8"/></g></svg>
<div class="t" style="left:1133px;top:110px;letter-spacing:0.73px">MeshInstance</div>
<svg class="a" style="left:1350px;top:111px" width="14" height="14" viewBox="0 0 14 14"><g fill="#e6e7ea"><path d="M3.2 0.5v6.5" stroke="#e6e7ea" stroke-width="1.4"/><circle cx="3.2" cy="1.2" r="1.1"/><path d="M1 7h4.4v5.2Q5.4 14 3.2 14T1 12.2z"/><path d="M10.2 5.5v8.5" stroke="#e6e7ea" stroke-width="1.8"/><path d="M7.8 0.5v3a2.4 2.4 0 0 0 4.8 0v-3h-1.2v2.2H9V0.5z"/></g></svg>
<div class="a" style="left:1107px;top:135px;width:264px;height:26px;background:#252a38;border:1px solid #1f2330"></div>
<div class="t" style="left:1113px;top:140px;letter-spacing:0.5px;color:#878a93">Filter properties</div>
<svg class="a" style="left:1349px;top:141px" width="15" height="15" viewBox="0 0 16 16"><circle cx="6.5" cy="6.5" r="4.2" fill="none" stroke="#e0e1e4" stroke-width="2"/><path d="M9.5 9.5l4.5 4.5" stroke="#e0e1e4" stroke-width="2.2" stroke-linecap="round"/></svg>
<div class="a" style="left:1107px;top:165px;width:264px;height:422px;background:#262c3b;border:1px solid #1f2330"></div>
<div class="a" style="left:1362px;top:168px;width:6px;height:415px;border-radius:3px;background:#2e3443"></div>
<div class="a" style="left:1362px;top:168px;width:6px;height:244px;border-radius:3px;background:#5a5f6b"></div>
<div class="a" style="left:1111px;top:169px;width:244px;height:22px;background:#404553"></div>
<svg class="a" style="left:1176px;top:173px" width="14" height="14" viewBox="0 0 14 14"><g stroke="#fc9c9c" stroke-width="2" fill="none"><path d="M2 2h10v10H2zM2 2l10 10"/></g><g fill="#fc9c9c"><circle cx="2" cy="2" r="1.8"/><circle cx="12" cy="2" r="1.8"/><circle cx="2" cy="12" r="1.8"/><circle cx="12" cy="12" r="1.8"/></g></svg>
<div class="t" style="left:1195px;top:172px;letter-spacing:0.73px">MeshInstance</div>
<div class="t" style="left:1112px;top:215px;letter-spacing:0.4px;color:#b9bcc3">Mesh</div>
<svg class="a" style="left:1215px;top:216px" width="14" height="14" viewBox="0 0 14 14"><path d="M2.8 7.5A4.7 4.7 0 1 1 7.5 12.2" fill="none" stroke="#e6e7ea" stroke-width="2"/><path d="M0 6.5H5.6L2.8 10z" fill="#e6e7ea"/></svg>
<div class="a" style="left:1233px;top:191px;width:122px;height:64px;background:#20242f"></div>
<svg class="a" style="left:1240px;top:216px" width="14" height="14" viewBox="0 0 14 14"><g fill="none" stroke="#f2c55c" stroke-width="1.6" stroke-linejoin="round"><path d="M7 1L13 4V10L7 13 1 10V4z"/><path d="M1 4L7 7 13 4M7 7V13"/></g></svg>
<svg class="a" style="left:1258px;top:194px" width="66" height="60" viewBox="0 0 66 60"><path d="M3 14L22 0 64 4 62 5 45 18z" fill="#d0d0d0"/><path d="M45 18L62 5V45L45 60z" fill="#c4c4c4"/><path d="M3 14L45 18V60L3 53z" fill="#555555"/></svg>
<svg class="a" style="left:1336px;top:219px" width="10" height="8"><path d="M1 1.5l4 4 4-4" fill="none" stroke="#c8cad0" stroke-width="1.6"/></svg>
<div class="t" style="left:1112px;top:264px;letter-spacing:0.4px;color:#b9bcc3">Skin</div>
<div class="a" style="left:1233px;top:259px;width:122px;height:26px;background:#20242f"></div>
<div class="t" style="left:1253px;top:264px;letter-spacing:1.1px">[empty]</div>
<svg class="a" style="left:1336px;top:268px" width="10" height="8"><path d="M1 1.5l4 4 4-4" fill="none" stroke="#c8cad0" stroke-width="1.6"/></svg>
<div class="t" style="left:1112px;top:294px;letter-spacing:0.3px;color:#b9bcc3">Skeleton</div>
<svg class="a" style="left:1215px;top:295px" width="14" height="14" viewBox="0 0 14 14"><path d="M2.8 7.5A4.7 4.7 0 1 1 7.5 12.2" fill="none" stroke="#e6e7ea" stroke-width="2"/><path d="M0 6.5H5.6L2.8 10z" fill="#e6e7ea"/></svg>
<div class="a" style="left:1233px;top:290px;width:89px;height:24px;background:#282e3d"></div>
<div class="a" style="left:1322px;top:290px;width:33px;height:24px;background:#20242f"></div>
<div class="t" style="left:1248px;top:293px;letter-spacing:0.4px">Assign...</div>
<svg class="a" style="left:1334px;top:294px" width="13" height="14" viewBox="0 0 13 14"><path d="M5.5 0h2v6h-2z" fill="#e6e7ea"/><path d="M2 6.5h9v2H2z" fill="#e6e7ea"/><path d="M1.5 9h10l0.5 4.5L6.5 13 1 14z" fill="#e6e7ea"/></svg>
<div class="a" style="left:1111px;top:315px;width:244px;height:22px;background:#363b49"></div>
<svg class="a" style="left:1116px;top:321px" width="8" height="10"><path d="M2 1l4 4-4 4" fill="none" stroke="#9a9da5" stroke-width="1.6"/></svg>
<div class="t" style="left:1130px;top:318px;letter-spacing:0.6px">Software Skinning</div>
<div class="a" style="left:1111px;top:337px;width:244px;height:22px;background:#363b49"></div>
<svg class="a" style="left:1114px;top:344px" width="10" height="8"><path d="M1 1.5l4 4 4-4" fill="none" stroke="#9a9da5" stroke-width="1.6"/></svg>
<div class="t" style="left:1130px;top:340px;letter-spacing:0.75px">Material</div>
<div class="a" style="left:1111px;top:359px;width:126px;height:26px;background:#2c3141"></div>
<div class="t" style="left:1120px;top:365px;color:#b9bcc3">0</div>
<div class="a" style="left:1237px;top:359px;width:118px;height:26px;background:#20242f"></div>
<div class="t" style="left:1255px;top:364px;letter-spacing:1.1px">[empty]</div>
<svg class="a" style="left:1337px;top:369px" width="10" height="8"><path d="M1 1.5l4 4 4-4" fill="none" stroke="#c8cad0" stroke-width="1.6"/></svg>
<div class="a" style="left:1111px;top:386px;width:244px;height:21px;background:#404553"></div>
<svg class="a" style="left:1162px;top:389px" width="14" height="14" viewBox="0 0 14 14"><path d="M7 0.3L13.5 3.6V10.4L7 13.7 0.5 10.4V3.6z" fill="#e6e7ea"/><path d="M4.5 3.7L7 2.4 9.5 3.7 7 5z" fill="#404553"/><path d="M2.5 6v3.3l2.2 1.1V7.2z" fill="#404553"/></svg>
<div class="t" style="left:1181px;top:388px;letter-spacing:0.53px">GeometryInstance</div>
<div class="a" style="left:1111px;top:407px;width:244px;height:66px;background:#363b49"></div>
<svg class="a" style="left:1116px;top:413px" width="8" height="10"><path d="M2 1l4 4-4 4" fill="none" stroke="#9a9da5" stroke-width="1.6"/></svg>
<div class="t" style="left:1130px;top:410px;letter-spacing:0.37px">Geometry</div>
<svg class="a" style="left:1116px;top:435px" width="8" height="10"><path d="M2 1l4 4-4 4" fill="none" stroke="#9a9da5" stroke-width="1.6"/></svg>
<div class="t" style="left:1130px;top:432px;letter-spacing:0.57px">Baked Light</div>
<svg class="a" style="left:1116px;top:457px" width="8" height="10"><path d="M2 1l4 4-4 4" fill="none" stroke="#9a9da5" stroke-width="1.6"/></svg>
<div class="t" style="left:1130px;top:454px;letter-spacing:0.3px">Lod</div>
<div class="a" style="left:1111px;top:473px;width:244px;height:21px;background:#404553"></div>
<svg class="a" style="left:1175px;top:477px" width="14" height="14" viewBox="0 0 14 14"><path d="M7 0.3L13.5 3.6V10.4L7 13.7 0.5 10.4V3.6z" fill="#e6e7ea"/><path d="M4.5 3.7L7 2.4 9.5 3.7 7 5z" fill="#404553"/><path d="M2.5 6v3.3l2.2 1.1V7.2z" fill="#404553"/></svg>
<div class="t" style="left:1194px;top:475px;letter-spacing:0.46px">VisualInstance</div>
<div class="t" style="left:1112px;top:498px;letter-spacing:0.2px;color:#b9bcc3">Layers</div>
<div class="a" style="left:1111px;top:518px;width:244px;height:34px;background:#20242f"></div>
<div class="a" style="left:1115px;top:520px;width:14px;height:14px;background:#b4b6bb"></div><div class="a" style="left:1115px;top:535px;width:14px;height:14px;background:#4a4d56"></div><div class="a" style="left:1130px;top:520px;width:14px;height:14px;background:#4a4d56"></div><div class="a" style="left:1130px;top:535px;width:14px;height:14px;background:#4a4d56"></div><div class="a" style="left:1145px;top:520px;width:14px;height:14px;background:#4a4d56"></div><div class="a" style="left:1145px;top:535px;width:14px;height:14px;background:#4a4d56"></div><div class="a" style="left:1160px;top:520px;width:14px;height:14px;background:#4a4d56"></div><div class="a" style="left:1160px;top:535px;width:14px;height:14px;background:#4a4d56"></div><div class="a" style="left:1175px;top:520px;width:14px;height:14px;background:#4a4d56"></div><div class="a" style="left:1175px;top:535px;width:14px;height:14px;background:#4a4d56"></div><div class="a" style="left:1191px;top:520px;width:14px;height:14px;background:#4a4d56"></div><div class="a" style="left:1191px;top:535px;width:14px;height:14px;background:#4a4d56"></div><div class="a" style="left:1206px;top:520px;width:14px;height:14px;background:#4a4d56"></div><div class="a" style="left:1206px;top:535px;width:14px;height:14px;background:#4a4d56"></div><div class="a" style="left:1221px;top:520px;width:14px;height:14px;background:#4a4d56"></div><div class="a" style="left:1221px;top:535px;width:14px;height:14px;background:#4a4d56"></div><div class="a" style="left:1236px;top:520px;width:14px;height:14px;background:#4a4d56"></div><div class="a" style="left:1236px;top:535px;width:14px;height:14px;background:#4a4d56"></div><div class="a" style="left:1251px;top:520px;width:14px;height:14px;background:#4a4d56"></div><div class="a" style="left:1251px;top:535px;width:14px;height:14px;background:#4a4d56"></div>
<div class="a" style="left:1332px;top:518px;width:23px;height:34px;background:#272c3b;border-left:1px solid #1d212b"></div>
<div class="a" style="left:1338px;top:538px;width:2px;height:2px;background:#e6e7ea"></div><div class="a" style="left:1342px;top:538px;width:2px;height:2px;background:#e6e7ea"></div><div class="a" style="left:1346px;top:538px;width:2px;height:2px;background:#e6e7ea"></div>
<div class="a" style="left:1111px;top:553px;width:244px;height:22px;background:#404553"></div>
<div class="a" style="left:1202px;top:558px;width:12px;height:12px;border-radius:50%;border:2px solid #fc9c9c"></div>
<div class="t" style="left:1220px;top:556px;letter-spacing:0.67px">Spatial</div>
<div class="a" style="left:1111px;top:575px;width:244px;height:11px;background:#363b49;overflow:hidden"><div class="t" style="left:19px;top:4px;letter-spacing:0.6px">Transform</div><svg class="a" style="left:5px;top:8px" width="8" height="10"><path d="M2 1l4 4-4 4" fill="none" stroke="#9a9da5" stroke-width="1.6"/></svg></div>
</body></html>
